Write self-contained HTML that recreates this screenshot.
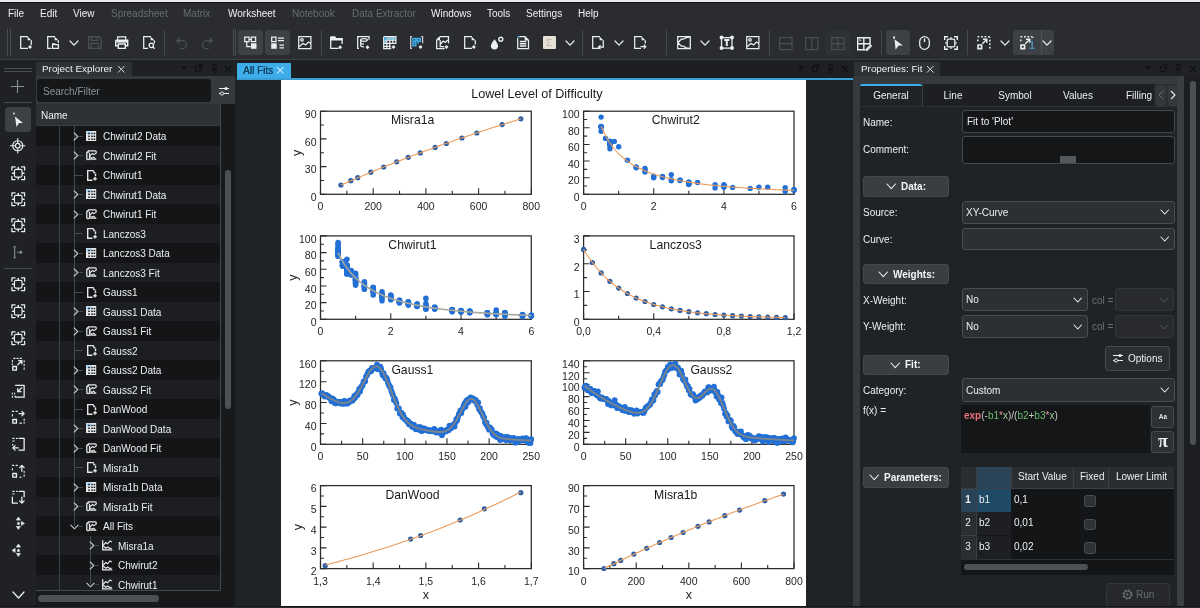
<!DOCTYPE html><html><head><meta charset="utf-8"><style>
html,body{margin:0;padding:0;}
body{width:1200px;height:608px;overflow:hidden;position:relative;background:#2a2c30;font-family:"Liberation Sans",sans-serif;}
.a{position:absolute;}
.t{position:absolute;white-space:nowrap;line-height:1;will-change:transform;}
</style></head><body>
<div class="a" style="left:0px;top:0px;width:1200px;height:2px;background:#e9eaec;"></div>
<div class="a" style="left:0px;top:2px;width:1200px;height:1px;background:#141517;"></div>
<div class="a" style="left:0px;top:3px;width:1200px;height:57px;background:#2a2c30;"></div>
<div class="t" style="left:8.3px;top:9.34px;font-size:10px;line-height:1;color:#f0f0f0;">File</div>
<div class="t" style="left:39.5px;top:9.34px;font-size:10px;line-height:1;color:#f0f0f0;">Edit</div>
<div class="t" style="left:73px;top:9.34px;font-size:10px;line-height:1;color:#f0f0f0;">View</div>
<div class="t" style="left:110.8px;top:9.34px;font-size:10px;line-height:1;color:#686c70;">Spreadsheet</div>
<div class="t" style="left:182.8px;top:9.34px;font-size:10px;line-height:1;color:#686c70;">Matrix</div>
<div class="t" style="left:227.5px;top:9.34px;font-size:10px;line-height:1;color:#f0f0f0;">Worksheet</div>
<div class="t" style="left:292px;top:9.34px;font-size:10px;line-height:1;color:#686c70;">Notebook</div>
<div class="t" style="left:351.5px;top:9.34px;font-size:10px;line-height:1;color:#686c70;">Data Extractor</div>
<div class="t" style="left:430.7px;top:9.34px;font-size:10px;line-height:1;color:#f0f0f0;">Windows</div>
<div class="t" style="left:487px;top:9.34px;font-size:10px;line-height:1;color:#f0f0f0;">Tools</div>
<div class="t" style="left:526px;top:9.34px;font-size:10px;line-height:1;color:#f0f0f0;">Settings</div>
<div class="t" style="left:577.7px;top:9.34px;font-size:10px;line-height:1;color:#f0f0f0;">Help</div>
<div class="a" style="left:0px;top:59px;width:1200px;height:1px;background:#3b3f43;"></div>
<div class="a" style="left:7px;top:29px;width:1px;height:27px;background:#4a4e52;"></div><div class="a" style="left:10px;top:29px;width:1px;height:27px;background:#4a4e52;"></div><svg class="a" style="left:20.2px;top:36px;overflow:visible;" width="14" height="14" viewBox="0 0 14 14"><g fill="none" stroke="#eceff1" stroke-width="1.25" stroke-linejoin="miter" stroke-linecap="butt"><path d="M8 0.6H0.7V12.4H8 M11.3 4.3V9"/><path d="M7.6 0.6L11.3 4.3H7.6z" fill="#eceff1" stroke="none"/><path d="M8 11l2 -2l2 2l-2 2z" fill="#eceff1" stroke="none"/></g></svg><svg class="a" style="left:46.8px;top:36px;overflow:visible;" width="14" height="14" viewBox="0 0 14 14"><g fill="none" stroke="#eceff1" stroke-width="1.25" stroke-linejoin="miter" stroke-linecap="butt"><path d="M8 0.6H0.7V12.4H4.5 M11.3 4.3V7"/><path d="M7.6 0.6L11.3 4.3H7.6z" fill="#eceff1" stroke="none"/><path d="M5.6 7.8h2.2l0.8 0.8h2.8v3.8h-5.8z" /><path d="M5.6 8.6h6" stroke-width="1"/></g></svg><svg class="a" style="left:69.5px;top:40.9px;overflow:visible;" width="8" height="4.2" viewBox="0 0 8 4.2"><path d="M0 0L4.0 4.2L8 0" stroke="#eceff1" stroke-width="1.2" fill="none" stroke-linejoin="round" stroke-linecap="round"/></svg><svg class="a" style="left:88.2px;top:36px;overflow:visible;" width="14" height="14" viewBox="0 0 14 14"><g fill="none" stroke="#4c5054" stroke-width="1.25" stroke-linejoin="miter" stroke-linecap="butt"><path d="M0.7 0.7h10.5l2 2v9.7h-12.5z M3.5 0.7v3.6h6v-3.6 M3 12.4v-5h7.5v5"/></g></svg><svg class="a" style="left:115px;top:36px;overflow:visible;" width="14" height="14" viewBox="0 0 14 14"><g fill="none" stroke="#eceff1" stroke-width="1.25" stroke-linejoin="miter" stroke-linecap="butt"><path d="M2.7 3.8v-3h8v3"/><path d="M0.7 4.3h12v5.5h-2 M2.7 9.8h-2v-5.5" stroke-width="1.4"/><path d="M3.3 8h7v4.4h-7z" stroke-width="1.4"/><path d="M1.5 4.8h10.5v1.8h-10.5z" fill="#eceff1" stroke="none"/></g></svg><svg class="a" style="left:142.5px;top:36px;overflow:visible;" width="14" height="14" viewBox="0 0 14 14"><g fill="none" stroke="#eceff1" stroke-width="1.25" stroke-linejoin="miter" stroke-linecap="butt"><path d="M8 0.6H0.7V12.4H5 M11.3 4.3V7.5"/><path d="M7.6 0.6L11.3 4.3H7.6z" fill="#eceff1" stroke="none"/><circle cx="8.3" cy="9.3" r="2.2"/><path d="M9.9 10.9l1.8 1.8" stroke-width="1.4"/></g></svg><div class="a" style="left:164px;top:30px;width:1px;height:25px;background:#45494d;"></div><svg class="a" style="left:175.5px;top:37px;overflow:visible;" width="12" height="13" viewBox="0 0 12 13"><g fill="none" stroke="#4c5054" stroke-width="1.25" stroke-linejoin="miter" stroke-linecap="butt"><path d="M3.5 1L0.8 3.7L3.5 6.4 M0.8 3.7h5.5a4 4 0 0 1 0 8h-2"/></g></svg><svg class="a" style="left:200.5px;top:37px;overflow:visible;" width="12" height="13" viewBox="0 0 12 13"><g fill="none" stroke="#4c5054" stroke-width="1.25" stroke-linejoin="miter" stroke-linecap="butt"><path d="M8.5 1L11.2 3.7L8.5 6.4 M11.2 3.7h-5.5a4 4 0 0 0 0 8h2"/></g></svg><div class="a" style="left:232.5px;top:29px;width:1px;height:27px;background:#4a4e52;"></div><div class="a" style="left:235px;top:29px;width:1px;height:27px;background:#4a4e52;"></div><div class="a" style="left:238px;top:30px;width:25px;height:25px;background:#3d4044;border-radius:3.5px;"></div><div class="a" style="left:265px;top:30px;width:25px;height:25px;background:#3d4044;border-radius:3.5px;"></div><svg class="a" style="left:244px;top:36px;overflow:visible;" width="14" height="14" viewBox="0 0 14 14"><g fill="none" stroke="#eceff1" stroke-width="1.25" stroke-linejoin="miter" stroke-linecap="butt"><path d="M0.7 1.2h4.3v4.3h-4.3z M7.3 1.2h4.3v4.3h-4.3z M5 3.3h2.3 M2.8 5.5v5.2h4"/><path d="M7 7.3h5.5v5.5h-5.5z" fill="#eceff1" stroke="none"/></g></svg><svg class="a" style="left:271px;top:36px;overflow:visible;" width="14" height="14" viewBox="0 0 14 14"><g fill="none" stroke="#eceff1" stroke-width="1.25" stroke-linejoin="miter" stroke-linecap="butt"><path d="M0.7 1.2h4.3v4.3h-4.3z M7 2h6 M7 4.7h6 M8.5 9.2h4.5 M8.5 11.8h4.5"/><path d="M0.2 7.3h5.5v5.5h-5.5z" fill="#eceff1" stroke="none"/></g></svg><svg class="a" style="left:297.7px;top:36px;overflow:visible;" width="14" height="14" viewBox="0 0 14 14"><g fill="none" stroke="#eceff1" stroke-width="1.25" stroke-linejoin="miter" stroke-linecap="butt"><path d="M0.7 0.7h12.2v11.8h-12.2z M1.5 10.5l3.5-3.2l2.5 1.7l3-3l2.3 1.6"/><circle cx="4" cy="3.8" r="1.3"/></g></svg><div class="a" style="left:320.5px;top:30px;width:1px;height:25px;background:#45494d;"></div><svg class="a" style="left:330.3px;top:36px;overflow:visible;" width="14" height="14" viewBox="0 0 14 14"><g fill="none" stroke="#eceff1" stroke-width="1.25" stroke-linejoin="miter" stroke-linecap="butt"><path d="M0.7 1.2h4l1.2 1.4h6.2v5.5 M0.7 1.2v11.2h8"/><path d="M0.2 0.6h4.8l1.2 1.4h6.4v2.4h-12.4z" fill="#eceff1" stroke="none"/><path d="M8.2 11.2l2 -2l2 2l-2 2z" fill="#eceff1" stroke="none"/></g></svg><svg class="a" style="left:357.3px;top:36px;overflow:visible;" width="14" height="14" viewBox="0 0 14 14"><g fill="none" stroke="#eceff1" stroke-width="1.25" stroke-linejoin="miter" stroke-linecap="butt"><path d="M2 0.7h-1.3v11.7h1.3 M2 0.7h10v3"/><ellipse cx="7" cy="4" rx="3.3" ry="1.3"/><path d="M3.7 4v5.5c0 0.8 1.5 1.3 3.3 1.3 M3.7 6.8c0 0.8 1.5 1.3 3.3 1.3"/><path d="M8.5 11.2l2 -2l2 2l-2 2z" fill="#eceff1" stroke="none"/></g></svg><svg class="a" style="left:383px;top:36px;overflow:visible;" width="14" height="14" viewBox="0 0 14 14"><g fill="none" stroke="#eceff1" stroke-width="1.25" stroke-linejoin="miter" stroke-linecap="butt"><path d="M0.7 0.7h12.2v7.3 M0.7 0.7v11.8h7.5 M0.7 4h12.2 M0.7 7.3h12.2 M0.7 10.4h7 M3.8 0.7v11.8 M6.8 0.7v11.5 M9.8 0.7v7.3"/><path d="M1.2 1.2h2.3v2.5h-2.3z" fill="#3daee9" stroke="none"/><path d="M4.3 1.2h8v2.5h-8z" fill="#8ccbea" stroke="none"/><path d="M1.2 4.5h2.3v2.5h-2.3z" fill="#8ccbea" stroke="none"/><path d="M8.5 11l2 -2l2 2l-2 2z" fill="#eceff1" stroke="none"/></g></svg><svg class="a" style="left:410px;top:36px;overflow:visible;" width="14" height="14" viewBox="0 0 14 14"><g fill="none" stroke="#eceff1" stroke-width="1.25" stroke-linejoin="miter" stroke-linecap="butt"><path d="M2 0.7h-1.3v11.7h1.3 M11.3 0.7h1.3v6.5" stroke="#c9ccd0"/><path d="M3 2.5h2.8v2.8h-2.8z M7.5 2.5h2.8v2.8h-2.8z M3 7h2.8v2.8h-2.8z M7.5 7h1.5" stroke="#3daee9" stroke-width="1.6"/><path d="M8.5 11l2 -2l2 2l-2 2z" fill="#eceff1" stroke="none"/></g></svg><svg class="a" style="left:436.2px;top:36px;overflow:visible;" width="14" height="14" viewBox="0 0 14 14"><g fill="none" stroke="#eceff1" stroke-width="1.25" stroke-linejoin="miter" stroke-linecap="butt"><path d="M4 0.7h8.5v6.5 M0.7 4v8.5h8 M0.7 4l3.3-3.3 M4.2 4v6.5h4 M4.2 8.5l3-3.5l2 1.5l2.5-2.5"/><path d="M1 4.3l3-3v3z" fill="#eceff1" stroke="none"/><path d="M8.5 11l2 -2l2 2l-2 2z" fill="#eceff1" stroke="none"/></g></svg><svg class="a" style="left:464.3px;top:36px;overflow:visible;" width="14" height="14" viewBox="0 0 14 14"><g fill="none" stroke="#eceff1" stroke-width="1.25" stroke-linejoin="miter" stroke-linecap="butt"><path d="M8 0.6H0.7V12.4H8 M11.3 4.3V8.5"/><path d="M7.6 0.6L11.3 4.3H7.6z" fill="#eceff1" stroke="none"/><path d="M7.800000000000001 11l2 -2l2 2l-2 2z" fill="#eceff1" stroke="none"/></g></svg><svg class="a" style="left:489.7px;top:36px;overflow:visible;" width="14" height="14" viewBox="0 0 14 14"><g fill="none" stroke="#eceff1" stroke-width="1.25" stroke-linejoin="miter" stroke-linecap="butt"><path d="M4.5 3.2c-1.8 2.6-3.6 4.7-3.6 6.6a3.6 3.6 0 0 0 7.2 0c0-1.9-1.8-4-3.6-6.6z" fill="#eceff1" stroke="none"/><circle cx="10.8" cy="3.2" r="2" stroke-width="1.4"/></g></svg><svg class="a" style="left:516.7px;top:36px;overflow:visible;" width="14" height="14" viewBox="0 0 14 14"><g fill="none" stroke="#eceff1" stroke-width="1.25" stroke-linejoin="miter" stroke-linecap="butt"><path d="M2 0.6H8l3.5 3.6V12.5H0.7V2"/><path d="M7.6 0.6L11.5 4.5H7.6z" fill="#eceff1" stroke="none"/><path d="M2.8 5.5h6.5 M2.8 7.8h6.5 M2.8 10h6.5" stroke-width="1.4"/><path d="M0 0h3l-1.5 2z" fill="#3daee9" stroke="none"/></g></svg><div class="a" style="left:543px;top:35.8px;width:12.5px;height:13px;background:#e6e1d6;border-radius:1px;"></div><svg class="a" style="left:543px;top:35.8px;overflow:visible;" width="12.5" height="13" viewBox="0 0 12.5 13"><path d="M8.8 3.5h-5l2.5 3l-2.5 3h5" fill="none" stroke="#bdb5a3" stroke-width="0.9"/></svg><svg class="a" style="left:566.3px;top:40.9px;overflow:visible;" width="8" height="4.2" viewBox="0 0 8 4.2"><path d="M0 0L4.0 4.2L8 0" stroke="#eceff1" stroke-width="1.2" fill="none" stroke-linejoin="round" stroke-linecap="round"/></svg><div class="a" style="left:581.5px;top:30px;width:1px;height:25px;background:#45494d;"></div><svg class="a" style="left:592px;top:36px;overflow:visible;" width="14" height="14" viewBox="0 0 14 14"><g fill="none" stroke="#eceff1" stroke-width="1.25" stroke-linejoin="miter" stroke-linecap="butt"><path d="M8 0.6H0.7V12.4H5 M11.3 4.3V9"/><path d="M7.6 0.6L11.3 4.3H7.6z" fill="#eceff1" stroke="none"/><path d="M11.3 9v2.2h-4.5 M8.5 9.3l-2 1.9l2 1.9" stroke-width="1.3"/><path d="M5 12.4H7" /></g></svg><svg class="a" style="left:614.8px;top:40.9px;overflow:visible;" width="8" height="4.2" viewBox="0 0 8 4.2"><path d="M0 0L4.0 4.2L8 0" stroke="#eceff1" stroke-width="1.2" fill="none" stroke-linejoin="round" stroke-linecap="round"/></svg><svg class="a" style="left:634px;top:36px;overflow:visible;" width="14" height="14" viewBox="0 0 14 14"><g fill="none" stroke="#eceff1" stroke-width="1.25" stroke-linejoin="miter" stroke-linecap="butt"><path d="M8 0.6H0.7V12.4H7 M11.3 4.3V7.5"/><path d="M7.6 0.6L11.3 4.3H7.6z" fill="#eceff1" stroke="none"/><path d="M6.5 10.7h5 M9.8 8.8l2 1.9l-2 1.9" stroke-width="1.3"/></g></svg><div class="a" style="left:666px;top:30px;width:1px;height:25px;background:#45494d;"></div><svg class="a" style="left:677px;top:36px;overflow:visible;" width="15" height="14" viewBox="0 0 15 14"><g fill="none" stroke="#eceff1" stroke-width="1.25" stroke-linejoin="miter" stroke-linecap="butt"><path d="M0.7 0.7h12.6v12h-12.6z M1 6.7l3.3-3.5h2l3.5-1.8h2.5 M1 6.7l3.3 3.5h2l3.5 1.8h2.5"/></g></svg><svg class="a" style="left:700.8px;top:40.9px;overflow:visible;" width="8" height="4.2" viewBox="0 0 8 4.2"><path d="M0 0L4.0 4.2L8 0" stroke="#eceff1" stroke-width="1.2" fill="none" stroke-linejoin="round" stroke-linecap="round"/></svg><svg class="a" style="left:719.5px;top:35.8px;overflow:visible;" width="14" height="14" viewBox="0 0 14 14"><g fill="none" stroke="#eceff1" stroke-width="1.25" stroke-linejoin="miter" stroke-linecap="butt"><path d="M1.5 1.5h10.5v10.5h-10.5z"/><path d="M4.2 4h5.2 M6.8 4v6" stroke-width="2"/><circle cx="1.5" cy="1.5" r="1.3" fill="#eceff1"/><circle cx="12" cy="1.5" r="1.3" fill="#eceff1"/><circle cx="1.5" cy="12" r="1.3" fill="#eceff1"/><circle cx="12" cy="12" r="1.3" fill="#eceff1"/></g></svg><svg class="a" style="left:745.7px;top:36px;overflow:visible;" width="14" height="14" viewBox="0 0 14 14"><g fill="none" stroke="#eceff1" stroke-width="1.25" stroke-linejoin="miter" stroke-linecap="butt"><path d="M0.7 0.7h12.2v11.8h-12.2z M1.5 10.5l3.5-3.2l2.5 1.7l3-3l2.3 1.6"/><circle cx="4" cy="3.8" r="1.3"/></g></svg><div class="a" style="left:769px;top:30px;width:1px;height:25px;background:#45494d;"></div><svg class="a" style="left:778.5px;top:36.5px;overflow:visible;" width="14" height="14" viewBox="0 0 14 14"><g fill="none" stroke="#4a4e52" stroke-width="1.25" stroke-linejoin="miter" stroke-linecap="butt"><path d="M0.7 0.7h12.3v12h-12.3z M0.7 6.7h12.3"/></g></svg><svg class="a" style="left:805px;top:36.5px;overflow:visible;" width="14" height="14" viewBox="0 0 14 14"><g fill="none" stroke="#4a4e52" stroke-width="1.25" stroke-linejoin="miter" stroke-linecap="butt"><path d="M0.7 0.7h12.3v12h-12.3z M6.8 0.7v12"/></g></svg><div class="a" style="left:826px;top:30px;width:24.5px;height:24.5px;background:#2d3034;border-radius:3.5px;"></div><svg class="a" style="left:831.3px;top:36.5px;overflow:visible;" width="14" height="14" viewBox="0 0 14 14"><g fill="none" stroke="#4a4e52" stroke-width="1.25" stroke-linejoin="miter" stroke-linecap="butt"><path d="M0.7 0.7h12.3v12h-12.3z M6.8 0.7v12 M0.7 6.7h12.3"/></g></svg><svg class="a" style="left:857.3px;top:36.5px;overflow:visible;" width="15" height="14" viewBox="0 0 15 14"><g fill="none" stroke="#eceff1" stroke-width="1.25" stroke-linejoin="miter" stroke-linecap="butt"><path d="M8 12.7h-7.3v-12h12.3v7 M6.8 0.7v12 M0.7 6.7h12.3" stroke-width="1.4"/><path d="M2.3 2l2.5 1.2l-1.5 0.5l-0.3 1.5z" fill="#eceff1" stroke="none"/><path d="M9 12.5l4.5-4.5l1 1l-4.5 4.5h-1z" stroke-width="1.1"/></g></svg><div class="a" style="left:881px;top:30px;width:1px;height:25px;background:#45494d;"></div><div class="a" style="left:885.5px;top:30px;width:24.5px;height:24.5px;background:#3d4044;border-radius:3.5px;"></div><svg class="a" style="left:892px;top:35.5px;overflow:visible;" width="12" height="14" viewBox="0 0 12 14"><path d="M2.5 3.2l8.3 6.3h-4.2l-3 4.3z" fill="#eceff1"/><rect x="1" y="0.5" width="2" height="2" fill="#eceff1"/></svg><svg class="a" style="left:919px;top:36px;overflow:visible;" width="11" height="14" viewBox="0 0 11 14"><g fill="none" stroke="#eceff1" stroke-width="1.25" stroke-linejoin="miter" stroke-linecap="butt"><rect x="0.7" y="0.7" width="9.6" height="12.6" rx="4.8"/><path d="M5.5 2.5v3.5" stroke-width="1.4"/></g></svg><svg class="a" style="left:944.3px;top:35.5px;overflow:visible;" width="14" height="14" viewBox="0 0 14 14"><g fill="none" stroke="#eceff1" stroke-width="1.25" stroke-linejoin="miter" stroke-linecap="butt"><path d="M0.7 4v-3.3h3.3 M10 0.7h3.3v3.3 M13.3 10v3.3h-3.3 M4 13.3h-3.3v-3.3" stroke-width="1.4"/><rect x="3.2" y="3.2" width="7.6" height="7.6" rx="1.4" stroke-width="1.3"/><path d="M7 1.3v1.4 M7 11.3v1.4 M1.3 7h1.4 M11.3 7h1.4" stroke-width="1.6"/></g></svg><div class="a" style="left:967px;top:30px;width:1px;height:25px;background:#45494d;"></div><svg class="a" style="left:976.9px;top:35.5px;overflow:visible;" width="14" height="14" viewBox="0 0 14 14"><g fill="none" stroke="#eceff1" stroke-width="1.25" stroke-linejoin="miter" stroke-linecap="butt"><path d="M0.5 0.8h1.8 M4 0.8h1.8 M7.5 0.8h1.8 M11 0.8h1.5 M12.8 1.2v0.8 M12.8 3.8v1.8 M12.8 7.3v1.8 M12.8 10.8v1.8 M0.8 3.5v1.8" stroke-width="1.5"/><path d="M1 9h3.6v3.6h-3.6z" stroke-width="1.6"/><path d="M5.3 7.8l4-4 M6 3.3h3.8v3.8" stroke-width="1.4"/></g></svg><svg class="a" style="left:1000.8px;top:40.9px;overflow:visible;" width="8" height="4.2" viewBox="0 0 8 4.2"><path d="M0 0L4.0 4.2L8 0" stroke="#eceff1" stroke-width="1.2" fill="none" stroke-linejoin="round" stroke-linecap="round"/></svg><div class="a" style="left:1013.3px;top:30px;width:40.5px;height:24.5px;background:#3d4044;border-radius:3.5px;"></div><div class="a" style="left:1040.5px;top:30px;width:1px;height:24.5px;background:#4d5155;"></div><svg class="a" style="left:1019.5px;top:35.5px;overflow:visible;" width="14" height="14" viewBox="0 0 14 14"><g fill="none" stroke="#eceff1" stroke-width="1.25" stroke-linejoin="miter" stroke-linecap="butt"><path d="M0.5 0.8h1.8 M4 0.8h1.8 M7.5 0.8h1.8 M11 0.8h1.5 M12.8 1.2v0.8 M0.8 3.5v1.8" stroke-width="1.5"/><path d="M1 9h3.6v3.6h-3.6z" stroke-width="1.6"/><path d="M5.3 7.8l4-4 M6 3.3h3.8v3.8" stroke-width="1.4"/></g></svg><div class="t" style="left:1028.5px;top:39.5px;font-size:10.5px;line-height:1;color:#4f8fb3;font-weight:bold">1</div><svg class="a" style="left:1043.0px;top:40.9px;overflow:visible;" width="8" height="4.2" viewBox="0 0 8 4.2"><path d="M0 0L4.0 4.2L8 0" stroke="#eceff1" stroke-width="1.2" fill="none" stroke-linejoin="round" stroke-linecap="round"/></svg>
<div class="a" style="left:0px;top:60px;width:36px;height:546px;background:#1f2124;"></div>
<div class="a" style="left:4px;top:67.5px;width:28px;height:1px;background:#4a4e52;"></div><div class="a" style="left:4px;top:70.5px;width:28px;height:1px;background:#4a4e52;"></div><svg class="a" style="left:11px;top:80px;overflow:visible;" width="13" height="13" viewBox="0 0 13 13"><path d="M6.5 0v13M0 6.5h13" stroke="#8a8e92" stroke-width="1.1"/></svg><div class="a" style="left:4px;top:102px;width:28px;height:1px;background:#45494d;"></div><div class="a" style="left:5px;top:106.5px;width:25.5px;height:25px;background:#3d4044;border-radius:3.5px;"></div><svg class="a" style="left:11px;top:112px;overflow:visible;" width="14" height="16" viewBox="0 0 14 16"><path d="M4 4.5l8 6.5h-4l-2.5 4z" fill="#eceff1"/><circle cx="3" cy="1.5" r="0.9" fill="#eceff1"/></svg><svg class="a" style="left:10.3px;top:137.5px;overflow:visible;" width="15.5" height="15.5" viewBox="0 0 16 16"><g fill="none" stroke="#eceff1" stroke-width="1.2" stroke-linejoin="round" stroke-linecap="round"><circle cx="8" cy="8" r="5.2"/><circle cx="8" cy="8" r="2.4"/><path d="M8 0.5v4.2M8 11.3v4.2M0.5 8h4.2M11.3 8h4.2" stroke-width="1.1"/></g></svg><svg class="a" style="left:10.5px;top:165.5px;overflow:visible;" width="14.5" height="14.5" viewBox="0 0 16 16"><g fill="none" stroke="#eceff1" stroke-width="1.3" stroke-linejoin="round" stroke-linecap="round"><path d="M1 4.5V1h3.5 M11.5 1H15v3.5 M15 11.5V15h-3.5 M4.5 15H1v-3.5" stroke-width="1.4"/><rect x="3.8" y="3.8" width="8.4" height="8.4" rx="1.6" stroke-width="1.3"/><path d="M8 1.6v1.4 M8 13v1.4 M1.6 8h1.4 M13 8h1.4" stroke-width="1.6"/></g></svg><svg class="a" style="left:10.5px;top:191.5px;overflow:visible;" width="14.5" height="14.5" viewBox="0 0 16 16"><g fill="none" stroke="#eceff1" stroke-width="1.3" stroke-linejoin="round" stroke-linecap="round"><path d="M1 4.5V1h3.5 M11.5 1H15v3.5 M15 11.5V15h-3.5 M4.5 15H1v-3.5" stroke-width="1.4"/><rect x="3.8" y="3.8" width="8.4" height="8.4" rx="1.6" stroke-width="1.3"/><path d="M8 1.6v1.4 M8 13v1.4 M1.6 8h1.4 M13 8h1.4" stroke-width="1.6"/></g></svg><svg class="a" style="left:10.5px;top:218px;overflow:visible;" width="14.5" height="14.5" viewBox="0 0 16 16"><g fill="none" stroke="#eceff1" stroke-width="1.3" stroke-linejoin="round" stroke-linecap="round"><path d="M1 4.5V1h3.5 M11.5 1H15v3.5 M15 11.5V15h-3.5 M4.5 15H1v-3.5" stroke-width="1.4"/><rect x="3.8" y="3.8" width="8.4" height="8.4" rx="1.6" stroke-width="1.3"/><path d="M8 1.6v1.4 M8 13v1.4 M1.6 8h1.4 M13 8h1.4" stroke-width="1.6"/></g></svg><svg class="a" style="left:10.5px;top:244.5px;overflow:visible;" width="14.5" height="14.5" viewBox="0 0 16 16"><g fill="none" stroke="#8a8e92" stroke-width="1.2" stroke-linejoin="round" stroke-linecap="round"><path d="M3 2h2M4 2v12M3 14h2 M7 8h3.5" /><path d="M10 5.5l3 2.5l-3 2.5z" fill="#8a8e92" stroke="none"/></g></svg><div class="a" style="left:4px;top:267.5px;width:28px;height:1px;background:#45494d;"></div><svg class="a" style="left:10.5px;top:277px;overflow:visible;" width="14.5" height="14.5" viewBox="0 0 16 16"><g fill="none" stroke="#eceff1" stroke-width="1.3" stroke-linejoin="round" stroke-linecap="round"><path d="M1 4.5V1h3.5 M11.5 1H15v3.5 M15 11.5V15h-3.5 M4.5 15H1v-3.5" stroke-width="1.4"/><rect x="3.8" y="3.8" width="8.4" height="8.4" rx="1.6" stroke-width="1.3"/><path d="M8 1.6v1.4 M8 13v1.4 M1.6 8h1.4 M13 8h1.4" stroke-width="1.6"/></g></svg><svg class="a" style="left:10.5px;top:304px;overflow:visible;" width="14.5" height="14.5" viewBox="0 0 16 16"><g fill="none" stroke="#eceff1" stroke-width="1.3" stroke-linejoin="round" stroke-linecap="round"><path d="M1 4.5V1h3.5 M11.5 1H15v3.5 M15 11.5V15h-3.5 M4.5 15H1v-3.5" stroke-width="1.4"/><rect x="3.8" y="3.8" width="8.4" height="8.4" rx="1.6" stroke-width="1.3"/><path d="M8 1.6v1.4 M8 13v1.4 M1.6 8h1.4 M13 8h1.4" stroke-width="1.6"/></g></svg><svg class="a" style="left:10.5px;top:330.5px;overflow:visible;" width="14.5" height="14.5" viewBox="0 0 16 16"><g fill="none" stroke="#eceff1" stroke-width="1.3" stroke-linejoin="round" stroke-linecap="round"><path d="M1 4.5V1h3.5 M11.5 1H15v3.5 M15 11.5V15h-3.5 M4.5 15H1v-3.5" stroke-width="1.4"/><rect x="3.8" y="3.8" width="8.4" height="8.4" rx="1.6" stroke-width="1.3"/><path d="M8 1.6v1.4 M8 13v1.4 M1.6 8h1.4 M13 8h1.4" stroke-width="1.6"/></g></svg><svg class="a" style="left:10.5px;top:356.75px;overflow:visible;" width="14.5" height="14.5" viewBox="0 0 16 16"><g fill="none" stroke="#eceff1" stroke-width="1.2" stroke-linejoin="round" stroke-linecap="round"><path d="M3 1.5h1.5 M6.5 1.5h1.5 M10 1.5h1.5 M14.5 4v1.5 M14.5 8v1.5 M14.5 12v1.5 M1.5 4v1.5 M1.5 7.5v1"/><path d="M2 10.5h4v4h-4z" stroke-width="1.5"/><path d="M7.5 8.5l4.5-4.5 M8.5 4h3.5v3.5" stroke-width="1.4"/></g></svg><svg class="a" style="left:10.5px;top:383.75px;overflow:visible;" width="14.5" height="14.5" viewBox="0 0 16 16"><g fill="none" stroke="#eceff1" stroke-width="1.2" stroke-linejoin="round" stroke-linecap="round"><path d="M5 1.5h9.5v13h-9.5" stroke-width="1.4"/><path d="M1.5 10v1 M1.5 13.5v1 M4 10v1 M4 13.5h1"/><path d="M12 4l-4.5 4.5 M7.5 5v3.5h3.5" stroke-width="1.4"/></g></svg><svg class="a" style="left:10.5px;top:410.25px;overflow:visible;" width="14.5" height="14.5" viewBox="0 0 16 16"><g fill="none" stroke="#eceff1" stroke-width="1.2" stroke-linejoin="round" stroke-linecap="round"><path d="M1.5 1.5h1.5 M5.5 1.5h1.5 M14.5 10v1.5 M14.5 13.5v1 M10 14.5h1.5 M1.5 5v1.5"/><path d="M2 10.5h4v4h-4z" stroke-width="1.5"/><path d="M9 4h5.5 M12 1.5l2.5 2.5l-2.5 2.5" stroke-width="1.4"/></g></svg><svg class="a" style="left:10.5px;top:436.75px;overflow:visible;" width="14.5" height="14.5" viewBox="0 0 16 16"><g fill="none" stroke="#eceff1" stroke-width="1.2" stroke-linejoin="round" stroke-linecap="round"><path d="M2 1.5h1.5 M2 4.5h1.5 M6 1.5h1 M2 8v1"/><path d="M9 1.5h5.5v13h-5.5" stroke-width="1.4"/><path d="M2 12h6 M4.5 9.5l-2.5 2.5l2.5 2.5" stroke-width="1.4"/></g></svg><svg class="a" style="left:10.5px;top:463.75px;overflow:visible;" width="14.5" height="14.5" viewBox="0 0 16 16"><g fill="none" stroke="#eceff1" stroke-width="1.2" stroke-linejoin="round" stroke-linecap="round"><path d="M1.5 1.5h1.5 M5.5 1.5h1.5 M14.5 8v1.5 M14.5 12v1.5 M10 14.5h1 M1.5 5v1.5"/><path d="M2 10.5h4v4h-4z" stroke-width="1.5"/><path d="M12 8v-6.5 M9.5 4l2.5-2.5l2.5 2.5" stroke-width="1.4"/></g></svg><svg class="a" style="left:10.5px;top:490.25px;overflow:visible;" width="14.5" height="14.5" viewBox="0 0 16 16"><g fill="none" stroke="#eceff1" stroke-width="1.2" stroke-linejoin="round" stroke-linecap="round"><path d="M2 1.5h1.5 M2 4.5h1.5 M6 1.5h1"/><path d="M9 1.5h5.5v6 M1.5 8v6.5h5.5" stroke-width="1.4"/><path d="M12 8v6.5 M9.5 12l2.5 2.5l2.5-2.5" stroke-width="1.4"/></g></svg><svg class="a" style="left:10.5px;top:516.25px;overflow:visible;" width="14.5" height="14.5" viewBox="0 0 16 16"><g fill="none" stroke="#eceff1" stroke-width="1.2" stroke-linejoin="round" stroke-linecap="round"><path d="M8 1.5l-2 3h4z M8 14.5l-2-3h4z M14.5 8l-3-2v4z" fill="#eceff1" stroke-width="0.8"/><path d="M7.5 7.5h1.5v1.5h-1.5z" fill="#eceff1"/></g></svg><svg class="a" style="left:10.5px;top:542.75px;overflow:visible;" width="14.5" height="14.5" viewBox="0 0 16 16"><g fill="none" stroke="#eceff1" stroke-width="1.2" stroke-linejoin="round" stroke-linecap="round"><path d="M8 1.5l-2 3h4z M8 14.5l-2-3h4z M1.5 8l3-2v4z" fill="#eceff1" stroke-width="0.8"/><path d="M7.5 7.5h1.5v1.5h-1.5z" fill="#eceff1"/></g></svg><svg class="a" style="left:12.5px;top:591.5px;overflow:visible;" width="11" height="6" viewBox="0 0 11 6"><path d="M0 0L5.5 6L11 0" stroke="#eceff1" stroke-width="1.3" fill="none" stroke-linejoin="round" stroke-linecap="round"/></svg>
<div class="a" style="left:36px;top:60px;width:199px;height:16px;background:#1f2124;"></div>
<div class="a" style="left:36px;top:62px;width:96px;height:14px;background:#2e3135;"></div>
<div class="t" style="left:42.3px;top:63.62px;font-size:9.9px;line-height:1;color:#f0f0f0;">Project Explorer</div>
<div class="a" style="left:36px;top:76px;width:199px;height:530px;background:#36393d;"></div>
<div class="a" style="left:37px;top:79px;width:174px;height:22.5px;background:#161719;border-radius:3px;"></div>
<div class="t" style="left:43px;top:87.23px;font-size:10px;line-height:1;color:#8d9296;">Search/Filter</div>
<div class="a" style="left:36px;top:104px;width:184px;height:21.5px;background:#2e3135;"></div>
<div class="a" style="left:36px;top:125px;width:184px;height:1px;background:#3a3d41;"></div>
<div class="t" style="left:40.5px;top:110.94px;font-size:10px;line-height:1;color:#f0f0f0;">Name</div>
<div class="a" style="left:36px;top:126px;width:184px;height:464px;overflow:hidden">
<div class="a" style="left:0;top:0.0px;width:184px;height:20.0px;background:#141517"></div>
<div class="a" style="left:0;top:19.5px;width:184px;height:20.0px;background:#1c1e21"></div>
<div class="a" style="left:0;top:39.0px;width:184px;height:20.0px;background:#141517"></div>
<div class="a" style="left:0;top:58.5px;width:184px;height:20.0px;background:#1c1e21"></div>
<div class="a" style="left:0;top:78.0px;width:184px;height:20.0px;background:#141517"></div>
<div class="a" style="left:0;top:97.5px;width:184px;height:20.0px;background:#1c1e21"></div>
<div class="a" style="left:0;top:117.0px;width:184px;height:20.0px;background:#141517"></div>
<div class="a" style="left:0;top:136.5px;width:184px;height:20.0px;background:#1c1e21"></div>
<div class="a" style="left:0;top:156.0px;width:184px;height:20.0px;background:#141517"></div>
<div class="a" style="left:0;top:175.5px;width:184px;height:20.0px;background:#1c1e21"></div>
<div class="a" style="left:0;top:195.0px;width:184px;height:20.0px;background:#141517"></div>
<div class="a" style="left:0;top:214.5px;width:184px;height:20.0px;background:#1c1e21"></div>
<div class="a" style="left:0;top:234.0px;width:184px;height:20.0px;background:#141517"></div>
<div class="a" style="left:0;top:253.5px;width:184px;height:20.0px;background:#1c1e21"></div>
<div class="a" style="left:0;top:273.0px;width:184px;height:20.0px;background:#141517"></div>
<div class="a" style="left:0;top:292.5px;width:184px;height:20.0px;background:#1c1e21"></div>
<div class="a" style="left:0;top:312.0px;width:184px;height:20.0px;background:#141517"></div>
<div class="a" style="left:0;top:331.5px;width:184px;height:20.0px;background:#1c1e21"></div>
<div class="a" style="left:0;top:351.0px;width:184px;height:20.0px;background:#141517"></div>
<div class="a" style="left:0;top:370.5px;width:184px;height:20.0px;background:#1c1e21"></div>
<div class="a" style="left:0;top:390.0px;width:184px;height:20.0px;background:#141517"></div>
<div class="a" style="left:0;top:409.5px;width:184px;height:20.0px;background:#1c1e21"></div>
<div class="a" style="left:0;top:429.0px;width:184px;height:20.0px;background:#141517"></div>
<div class="a" style="left:0;top:448.5px;width:184px;height:20.0px;background:#1c1e21"></div>
<div class="a" style="left:22.5px;top:0px;width:1.2px;height:464px;background:#3d4044;"></div><div class="a" style="left:38px;top:0px;width:1px;height:399.75px;background:#45484c;"></div><div class="a" style="left:54px;top:409.5px;width:1px;height:48.75px;background:#45484c;"></div><svg class="a" style="left:36.5px;top:5.85px;overflow:visible;" width="6" height="9" viewBox="0 0 6 9"><path d="M0.8 0.6L4.8 4.5L0.8 8.4" fill="none" stroke="#c8cbce" stroke-width="1.15"/></svg><div class="a" style="left:43.2px;top:9.85px;width:3.5px;height:1px;background:#45484c;"></div><svg class="a" style="left:50.1px;top:4.75px;overflow:visible;" width="11" height="11" viewBox="0 0 11 11"><g fill="none" stroke="#e6e8ea" stroke-width="1.2"><rect x="0" y="0" width="10.2" height="10" fill="#e6e8ea" stroke="none"/><path d="M0.5 0.5h5v3h-5z" fill="#9fd0f0" stroke="none"/><g fill="#141517" stroke="none"><rect x="2.2" y="1.8" width="1.6" height="1.4"/><rect x="5.2" y="1.8" width="1.6" height="1.4" fill="#2a3a48"/><rect x="7.6" y="1.8" width="1.6" height="1.4"/><rect x="2.2" y="4.6" width="1.6" height="1.4"/><rect x="5.2" y="4.6" width="1.6" height="1.4"/><rect x="7.6" y="4.6" width="1.6" height="1.4"/><rect x="2.2" y="7.5" width="1.6" height="1.4"/><rect x="5.2" y="7.5" width="1.6" height="1.4"/><rect x="7.6" y="7.5" width="1.6" height="1.4"/></g></g></svg><div class="t" style="left:67px;top:6.05px;font-size:10px;color:#eceff1;line-height:1">Chwirut2 Data</div><svg class="a" style="left:36.5px;top:25.35px;overflow:visible;" width="6" height="9" viewBox="0 0 6 9"><path d="M0.8 0.6L4.8 4.5L0.8 8.4" fill="none" stroke="#c8cbce" stroke-width="1.15"/></svg><div class="a" style="left:43.2px;top:29.35px;width:3.5px;height:1px;background:#45484c;"></div><svg class="a" style="left:50.1px;top:24.25px;overflow:visible;" width="11" height="11" viewBox="0 0 11 11"><g fill="none" stroke="#e6e8ea" stroke-width="1.2"><path d="M0.8 9.5V2.6L2.6 0.8H9.2Q10.2 0.8 10.2 1.8V3.5" stroke-width="1.3"/><path d="M0.6 2.8L2.8 0.6V2.8z" fill="#e6e8ea" stroke="none"/><path d="M3.5 2.8V9.2H10.3" stroke-width="1.2"/><path d="M3.5 6.2L6.5 3.5L8 4.6L9.8 3.2 M3.5 6.2L5.8 8.4L7.6 7.2L9.5 8.8" stroke-width="1.1"/><path d="M0.8 9.5H3" stroke-width="1.3"/></g></svg><div class="t" style="left:67px;top:25.55px;font-size:10px;color:#eceff1;line-height:1">Chwirut2 Fit</div><div class="a" style="left:39px;top:48.85px;width:7.5px;height:1px;background:#45484c;"></div><svg class="a" style="left:51.0px;top:43.75px;overflow:visible;" width="11" height="11" viewBox="0 0 11 11"><g fill="none" stroke="#e6e8ea" stroke-width="1.2"><path d="M6.8 0.6H0.7V10.3H5.5 M8.5 3.5V6.3" stroke-width="1.4"/><path d="M6.2 0.3L9 3.2H6.2z" fill="#e6e8ea" stroke="none"/><path d="M8 7v3.5 M6.3 8.8h3.5" stroke-width="1.4"/></g></svg><div class="t" style="left:67px;top:45.05px;font-size:10px;color:#eceff1;line-height:1">Chwirut1</div><svg class="a" style="left:36.5px;top:64.35px;overflow:visible;" width="6" height="9" viewBox="0 0 6 9"><path d="M0.8 0.6L4.8 4.5L0.8 8.4" fill="none" stroke="#c8cbce" stroke-width="1.15"/></svg><div class="a" style="left:43.2px;top:68.35px;width:3.5px;height:1px;background:#45484c;"></div><svg class="a" style="left:50.1px;top:63.24999999999999px;overflow:visible;" width="11" height="11" viewBox="0 0 11 11"><g fill="none" stroke="#e6e8ea" stroke-width="1.2"><rect x="0" y="0" width="10.2" height="10" fill="#e6e8ea" stroke="none"/><path d="M0.5 0.5h5v3h-5z" fill="#9fd0f0" stroke="none"/><g fill="#141517" stroke="none"><rect x="2.2" y="1.8" width="1.6" height="1.4"/><rect x="5.2" y="1.8" width="1.6" height="1.4" fill="#2a3a48"/><rect x="7.6" y="1.8" width="1.6" height="1.4"/><rect x="2.2" y="4.6" width="1.6" height="1.4"/><rect x="5.2" y="4.6" width="1.6" height="1.4"/><rect x="7.6" y="4.6" width="1.6" height="1.4"/><rect x="2.2" y="7.5" width="1.6" height="1.4"/><rect x="5.2" y="7.5" width="1.6" height="1.4"/><rect x="7.6" y="7.5" width="1.6" height="1.4"/></g></g></svg><div class="t" style="left:67px;top:64.55px;font-size:10px;color:#eceff1;line-height:1">Chwirut1 Data</div><svg class="a" style="left:36.5px;top:83.85px;overflow:visible;" width="6" height="9" viewBox="0 0 6 9"><path d="M0.8 0.6L4.8 4.5L0.8 8.4" fill="none" stroke="#c8cbce" stroke-width="1.15"/></svg><div class="a" style="left:43.2px;top:87.85px;width:3.5px;height:1px;background:#45484c;"></div><svg class="a" style="left:50.1px;top:82.75px;overflow:visible;" width="11" height="11" viewBox="0 0 11 11"><g fill="none" stroke="#e6e8ea" stroke-width="1.2"><path d="M0.8 9.5V2.6L2.6 0.8H9.2Q10.2 0.8 10.2 1.8V3.5" stroke-width="1.3"/><path d="M0.6 2.8L2.8 0.6V2.8z" fill="#e6e8ea" stroke="none"/><path d="M3.5 2.8V9.2H10.3" stroke-width="1.2"/><path d="M3.5 6.2L6.5 3.5L8 4.6L9.8 3.2 M3.5 6.2L5.8 8.4L7.6 7.2L9.5 8.8" stroke-width="1.1"/><path d="M0.8 9.5H3" stroke-width="1.3"/></g></svg><div class="t" style="left:67px;top:84.05px;font-size:10px;color:#eceff1;line-height:1">Chwirut1 Fit</div><div class="a" style="left:39px;top:107.35px;width:7.5px;height:1px;background:#45484c;"></div><svg class="a" style="left:51.0px;top:102.25px;overflow:visible;" width="11" height="11" viewBox="0 0 11 11"><g fill="none" stroke="#e6e8ea" stroke-width="1.2"><path d="M6.8 0.6H0.7V10.3H5.5 M8.5 3.5V6.3" stroke-width="1.4"/><path d="M6.2 0.3L9 3.2H6.2z" fill="#e6e8ea" stroke="none"/><path d="M8 7v3.5 M6.3 8.8h3.5" stroke-width="1.4"/></g></svg><div class="t" style="left:67px;top:103.55px;font-size:10px;color:#eceff1;line-height:1">Lanczos3</div><svg class="a" style="left:36.5px;top:122.85px;overflow:visible;" width="6" height="9" viewBox="0 0 6 9"><path d="M0.8 0.6L4.8 4.5L0.8 8.4" fill="none" stroke="#c8cbce" stroke-width="1.15"/></svg><div class="a" style="left:43.2px;top:126.85px;width:3.5px;height:1px;background:#45484c;"></div><svg class="a" style="left:50.1px;top:121.75px;overflow:visible;" width="11" height="11" viewBox="0 0 11 11"><g fill="none" stroke="#e6e8ea" stroke-width="1.2"><rect x="0" y="0" width="10.2" height="10" fill="#e6e8ea" stroke="none"/><path d="M0.5 0.5h5v3h-5z" fill="#9fd0f0" stroke="none"/><g fill="#141517" stroke="none"><rect x="2.2" y="1.8" width="1.6" height="1.4"/><rect x="5.2" y="1.8" width="1.6" height="1.4" fill="#2a3a48"/><rect x="7.6" y="1.8" width="1.6" height="1.4"/><rect x="2.2" y="4.6" width="1.6" height="1.4"/><rect x="5.2" y="4.6" width="1.6" height="1.4"/><rect x="7.6" y="4.6" width="1.6" height="1.4"/><rect x="2.2" y="7.5" width="1.6" height="1.4"/><rect x="5.2" y="7.5" width="1.6" height="1.4"/><rect x="7.6" y="7.5" width="1.6" height="1.4"/></g></g></svg><div class="t" style="left:67px;top:123.05px;font-size:10px;color:#eceff1;line-height:1">Lanczos3 Data</div><svg class="a" style="left:36.5px;top:142.35px;overflow:visible;" width="6" height="9" viewBox="0 0 6 9"><path d="M0.8 0.6L4.8 4.5L0.8 8.4" fill="none" stroke="#c8cbce" stroke-width="1.15"/></svg><div class="a" style="left:43.2px;top:146.35px;width:3.5px;height:1px;background:#45484c;"></div><svg class="a" style="left:50.1px;top:141.25px;overflow:visible;" width="11" height="11" viewBox="0 0 11 11"><g fill="none" stroke="#e6e8ea" stroke-width="1.2"><path d="M0.8 9.5V2.6L2.6 0.8H9.2Q10.2 0.8 10.2 1.8V3.5" stroke-width="1.3"/><path d="M0.6 2.8L2.8 0.6V2.8z" fill="#e6e8ea" stroke="none"/><path d="M3.5 2.8V9.2H10.3" stroke-width="1.2"/><path d="M3.5 6.2L6.5 3.5L8 4.6L9.8 3.2 M3.5 6.2L5.8 8.4L7.6 7.2L9.5 8.8" stroke-width="1.1"/><path d="M0.8 9.5H3" stroke-width="1.3"/></g></svg><div class="t" style="left:67px;top:142.55px;font-size:10px;color:#eceff1;line-height:1">Lanczos3 Fit</div><div class="a" style="left:39px;top:165.85px;width:7.5px;height:1px;background:#45484c;"></div><svg class="a" style="left:51.0px;top:160.75px;overflow:visible;" width="11" height="11" viewBox="0 0 11 11"><g fill="none" stroke="#e6e8ea" stroke-width="1.2"><path d="M6.8 0.6H0.7V10.3H5.5 M8.5 3.5V6.3" stroke-width="1.4"/><path d="M6.2 0.3L9 3.2H6.2z" fill="#e6e8ea" stroke="none"/><path d="M8 7v3.5 M6.3 8.8h3.5" stroke-width="1.4"/></g></svg><div class="t" style="left:67px;top:162.05px;font-size:10px;color:#eceff1;line-height:1">Gauss1</div><svg class="a" style="left:36.5px;top:181.35px;overflow:visible;" width="6" height="9" viewBox="0 0 6 9"><path d="M0.8 0.6L4.8 4.5L0.8 8.4" fill="none" stroke="#c8cbce" stroke-width="1.15"/></svg><div class="a" style="left:43.2px;top:185.35px;width:3.5px;height:1px;background:#45484c;"></div><svg class="a" style="left:50.1px;top:180.25px;overflow:visible;" width="11" height="11" viewBox="0 0 11 11"><g fill="none" stroke="#e6e8ea" stroke-width="1.2"><rect x="0" y="0" width="10.2" height="10" fill="#e6e8ea" stroke="none"/><path d="M0.5 0.5h5v3h-5z" fill="#9fd0f0" stroke="none"/><g fill="#141517" stroke="none"><rect x="2.2" y="1.8" width="1.6" height="1.4"/><rect x="5.2" y="1.8" width="1.6" height="1.4" fill="#2a3a48"/><rect x="7.6" y="1.8" width="1.6" height="1.4"/><rect x="2.2" y="4.6" width="1.6" height="1.4"/><rect x="5.2" y="4.6" width="1.6" height="1.4"/><rect x="7.6" y="4.6" width="1.6" height="1.4"/><rect x="2.2" y="7.5" width="1.6" height="1.4"/><rect x="5.2" y="7.5" width="1.6" height="1.4"/><rect x="7.6" y="7.5" width="1.6" height="1.4"/></g></g></svg><div class="t" style="left:67px;top:181.55px;font-size:10px;color:#eceff1;line-height:1">Gauss1 Data</div><svg class="a" style="left:36.5px;top:200.85px;overflow:visible;" width="6" height="9" viewBox="0 0 6 9"><path d="M0.8 0.6L4.8 4.5L0.8 8.4" fill="none" stroke="#c8cbce" stroke-width="1.15"/></svg><div class="a" style="left:43.2px;top:204.85px;width:3.5px;height:1px;background:#45484c;"></div><svg class="a" style="left:50.1px;top:199.75px;overflow:visible;" width="11" height="11" viewBox="0 0 11 11"><g fill="none" stroke="#e6e8ea" stroke-width="1.2"><path d="M0.8 9.5V2.6L2.6 0.8H9.2Q10.2 0.8 10.2 1.8V3.5" stroke-width="1.3"/><path d="M0.6 2.8L2.8 0.6V2.8z" fill="#e6e8ea" stroke="none"/><path d="M3.5 2.8V9.2H10.3" stroke-width="1.2"/><path d="M3.5 6.2L6.5 3.5L8 4.6L9.8 3.2 M3.5 6.2L5.8 8.4L7.6 7.2L9.5 8.8" stroke-width="1.1"/><path d="M0.8 9.5H3" stroke-width="1.3"/></g></svg><div class="t" style="left:67px;top:201.05px;font-size:10px;color:#eceff1;line-height:1">Gauss1 Fit</div><div class="a" style="left:39px;top:224.35px;width:7.5px;height:1px;background:#45484c;"></div><svg class="a" style="left:51.0px;top:219.25px;overflow:visible;" width="11" height="11" viewBox="0 0 11 11"><g fill="none" stroke="#e6e8ea" stroke-width="1.2"><path d="M6.8 0.6H0.7V10.3H5.5 M8.5 3.5V6.3" stroke-width="1.4"/><path d="M6.2 0.3L9 3.2H6.2z" fill="#e6e8ea" stroke="none"/><path d="M8 7v3.5 M6.3 8.8h3.5" stroke-width="1.4"/></g></svg><div class="t" style="left:67px;top:220.55px;font-size:10px;color:#eceff1;line-height:1">Gauss2</div><svg class="a" style="left:36.5px;top:239.85px;overflow:visible;" width="6" height="9" viewBox="0 0 6 9"><path d="M0.8 0.6L4.8 4.5L0.8 8.4" fill="none" stroke="#c8cbce" stroke-width="1.15"/></svg><div class="a" style="left:43.2px;top:243.85px;width:3.5px;height:1px;background:#45484c;"></div><svg class="a" style="left:50.1px;top:238.75px;overflow:visible;" width="11" height="11" viewBox="0 0 11 11"><g fill="none" stroke="#e6e8ea" stroke-width="1.2"><rect x="0" y="0" width="10.2" height="10" fill="#e6e8ea" stroke="none"/><path d="M0.5 0.5h5v3h-5z" fill="#9fd0f0" stroke="none"/><g fill="#141517" stroke="none"><rect x="2.2" y="1.8" width="1.6" height="1.4"/><rect x="5.2" y="1.8" width="1.6" height="1.4" fill="#2a3a48"/><rect x="7.6" y="1.8" width="1.6" height="1.4"/><rect x="2.2" y="4.6" width="1.6" height="1.4"/><rect x="5.2" y="4.6" width="1.6" height="1.4"/><rect x="7.6" y="4.6" width="1.6" height="1.4"/><rect x="2.2" y="7.5" width="1.6" height="1.4"/><rect x="5.2" y="7.5" width="1.6" height="1.4"/><rect x="7.6" y="7.5" width="1.6" height="1.4"/></g></g></svg><div class="t" style="left:67px;top:240.05px;font-size:10px;color:#eceff1;line-height:1">Gauss2 Data</div><svg class="a" style="left:36.5px;top:259.35px;overflow:visible;" width="6" height="9" viewBox="0 0 6 9"><path d="M0.8 0.6L4.8 4.5L0.8 8.4" fill="none" stroke="#c8cbce" stroke-width="1.15"/></svg><div class="a" style="left:43.2px;top:263.35px;width:3.5px;height:1px;background:#45484c;"></div><svg class="a" style="left:50.1px;top:258.25px;overflow:visible;" width="11" height="11" viewBox="0 0 11 11"><g fill="none" stroke="#e6e8ea" stroke-width="1.2"><path d="M0.8 9.5V2.6L2.6 0.8H9.2Q10.2 0.8 10.2 1.8V3.5" stroke-width="1.3"/><path d="M0.6 2.8L2.8 0.6V2.8z" fill="#e6e8ea" stroke="none"/><path d="M3.5 2.8V9.2H10.3" stroke-width="1.2"/><path d="M3.5 6.2L6.5 3.5L8 4.6L9.8 3.2 M3.5 6.2L5.8 8.4L7.6 7.2L9.5 8.8" stroke-width="1.1"/><path d="M0.8 9.5H3" stroke-width="1.3"/></g></svg><div class="t" style="left:67px;top:259.55px;font-size:10px;color:#eceff1;line-height:1">Gauss2 Fit</div><div class="a" style="left:39px;top:282.85px;width:7.5px;height:1px;background:#45484c;"></div><svg class="a" style="left:51.0px;top:277.75px;overflow:visible;" width="11" height="11" viewBox="0 0 11 11"><g fill="none" stroke="#e6e8ea" stroke-width="1.2"><path d="M6.8 0.6H0.7V10.3H5.5 M8.5 3.5V6.3" stroke-width="1.4"/><path d="M6.2 0.3L9 3.2H6.2z" fill="#e6e8ea" stroke="none"/><path d="M8 7v3.5 M6.3 8.8h3.5" stroke-width="1.4"/></g></svg><div class="t" style="left:67px;top:279.05px;font-size:10px;color:#eceff1;line-height:1">DanWood</div><svg class="a" style="left:36.5px;top:298.35px;overflow:visible;" width="6" height="9" viewBox="0 0 6 9"><path d="M0.8 0.6L4.8 4.5L0.8 8.4" fill="none" stroke="#c8cbce" stroke-width="1.15"/></svg><div class="a" style="left:43.2px;top:302.35px;width:3.5px;height:1px;background:#45484c;"></div><svg class="a" style="left:50.1px;top:297.25px;overflow:visible;" width="11" height="11" viewBox="0 0 11 11"><g fill="none" stroke="#e6e8ea" stroke-width="1.2"><rect x="0" y="0" width="10.2" height="10" fill="#e6e8ea" stroke="none"/><path d="M0.5 0.5h5v3h-5z" fill="#9fd0f0" stroke="none"/><g fill="#141517" stroke="none"><rect x="2.2" y="1.8" width="1.6" height="1.4"/><rect x="5.2" y="1.8" width="1.6" height="1.4" fill="#2a3a48"/><rect x="7.6" y="1.8" width="1.6" height="1.4"/><rect x="2.2" y="4.6" width="1.6" height="1.4"/><rect x="5.2" y="4.6" width="1.6" height="1.4"/><rect x="7.6" y="4.6" width="1.6" height="1.4"/><rect x="2.2" y="7.5" width="1.6" height="1.4"/><rect x="5.2" y="7.5" width="1.6" height="1.4"/><rect x="7.6" y="7.5" width="1.6" height="1.4"/></g></g></svg><div class="t" style="left:67px;top:298.55px;font-size:10px;color:#eceff1;line-height:1">DanWood Data</div><svg class="a" style="left:36.5px;top:317.85px;overflow:visible;" width="6" height="9" viewBox="0 0 6 9"><path d="M0.8 0.6L4.8 4.5L0.8 8.4" fill="none" stroke="#c8cbce" stroke-width="1.15"/></svg><div class="a" style="left:43.2px;top:321.85px;width:3.5px;height:1px;background:#45484c;"></div><svg class="a" style="left:50.1px;top:316.75px;overflow:visible;" width="11" height="11" viewBox="0 0 11 11"><g fill="none" stroke="#e6e8ea" stroke-width="1.2"><path d="M0.8 9.5V2.6L2.6 0.8H9.2Q10.2 0.8 10.2 1.8V3.5" stroke-width="1.3"/><path d="M0.6 2.8L2.8 0.6V2.8z" fill="#e6e8ea" stroke="none"/><path d="M3.5 2.8V9.2H10.3" stroke-width="1.2"/><path d="M3.5 6.2L6.5 3.5L8 4.6L9.8 3.2 M3.5 6.2L5.8 8.4L7.6 7.2L9.5 8.8" stroke-width="1.1"/><path d="M0.8 9.5H3" stroke-width="1.3"/></g></svg><div class="t" style="left:67px;top:318.05px;font-size:10px;color:#eceff1;line-height:1">DanWood Fit</div><div class="a" style="left:39px;top:341.35px;width:7.5px;height:1px;background:#45484c;"></div><svg class="a" style="left:51.0px;top:336.25px;overflow:visible;" width="11" height="11" viewBox="0 0 11 11"><g fill="none" stroke="#e6e8ea" stroke-width="1.2"><path d="M6.8 0.6H0.7V10.3H5.5 M8.5 3.5V6.3" stroke-width="1.4"/><path d="M6.2 0.3L9 3.2H6.2z" fill="#e6e8ea" stroke="none"/><path d="M8 7v3.5 M6.3 8.8h3.5" stroke-width="1.4"/></g></svg><div class="t" style="left:67px;top:337.55px;font-size:10px;color:#eceff1;line-height:1">Misra1b</div><svg class="a" style="left:36.5px;top:356.85px;overflow:visible;" width="6" height="9" viewBox="0 0 6 9"><path d="M0.8 0.6L4.8 4.5L0.8 8.4" fill="none" stroke="#c8cbce" stroke-width="1.15"/></svg><div class="a" style="left:43.2px;top:360.85px;width:3.5px;height:1px;background:#45484c;"></div><svg class="a" style="left:50.1px;top:355.75px;overflow:visible;" width="11" height="11" viewBox="0 0 11 11"><g fill="none" stroke="#e6e8ea" stroke-width="1.2"><rect x="0" y="0" width="10.2" height="10" fill="#e6e8ea" stroke="none"/><path d="M0.5 0.5h5v3h-5z" fill="#9fd0f0" stroke="none"/><g fill="#141517" stroke="none"><rect x="2.2" y="1.8" width="1.6" height="1.4"/><rect x="5.2" y="1.8" width="1.6" height="1.4" fill="#2a3a48"/><rect x="7.6" y="1.8" width="1.6" height="1.4"/><rect x="2.2" y="4.6" width="1.6" height="1.4"/><rect x="5.2" y="4.6" width="1.6" height="1.4"/><rect x="7.6" y="4.6" width="1.6" height="1.4"/><rect x="2.2" y="7.5" width="1.6" height="1.4"/><rect x="5.2" y="7.5" width="1.6" height="1.4"/><rect x="7.6" y="7.5" width="1.6" height="1.4"/></g></g></svg><div class="t" style="left:67px;top:357.05px;font-size:10px;color:#eceff1;line-height:1">Misra1b Data</div><svg class="a" style="left:36.5px;top:376.35px;overflow:visible;" width="6" height="9" viewBox="0 0 6 9"><path d="M0.8 0.6L4.8 4.5L0.8 8.4" fill="none" stroke="#c8cbce" stroke-width="1.15"/></svg><div class="a" style="left:43.2px;top:380.35px;width:3.5px;height:1px;background:#45484c;"></div><svg class="a" style="left:50.1px;top:375.25px;overflow:visible;" width="11" height="11" viewBox="0 0 11 11"><g fill="none" stroke="#e6e8ea" stroke-width="1.2"><path d="M0.8 9.5V2.6L2.6 0.8H9.2Q10.2 0.8 10.2 1.8V3.5" stroke-width="1.3"/><path d="M0.6 2.8L2.8 0.6V2.8z" fill="#e6e8ea" stroke="none"/><path d="M3.5 2.8V9.2H10.3" stroke-width="1.2"/><path d="M3.5 6.2L6.5 3.5L8 4.6L9.8 3.2 M3.5 6.2L5.8 8.4L7.6 7.2L9.5 8.8" stroke-width="1.1"/><path d="M0.8 9.5H3" stroke-width="1.3"/></g></svg><div class="t" style="left:67px;top:376.55px;font-size:10px;color:#eceff1;line-height:1">Misra1b Fit</div><svg class="a" style="left:34px;top:397.85px;overflow:visible;" width="9" height="6" viewBox="0 0 9 6"><path d="M0.6 0.8L4.5 4.8L8.4 0.8" fill="none" stroke="#c8cbce" stroke-width="1.15"/></svg><div class="a" style="left:43.2px;top:399.85px;width:3.5px;height:1px;background:#45484c;"></div><svg class="a" style="left:50.1px;top:394.75px;overflow:visible;" width="11" height="11" viewBox="0 0 11 11"><g fill="none" stroke="#e6e8ea" stroke-width="1.2"><path d="M0.8 9.5V2.6L2.6 0.8H9.2Q10.2 0.8 10.2 1.8V3.5" stroke-width="1.3"/><path d="M0.6 2.8L2.8 0.6V2.8z" fill="#e6e8ea" stroke="none"/><path d="M3.5 2.8V9.2H10.3" stroke-width="1.2"/><path d="M3.5 6.2L6.5 3.5L8 4.6L9.8 3.2 M3.5 6.2L5.8 8.4L7.6 7.2L9.5 8.8" stroke-width="1.1"/><path d="M0.8 9.5H3" stroke-width="1.3"/></g></svg><div class="t" style="left:67px;top:396.05px;font-size:10px;color:#eceff1;line-height:1">All Fits</div><svg class="a" style="left:52.5px;top:415.35px;overflow:visible;" width="6" height="9" viewBox="0 0 6 9"><path d="M0.8 0.6L4.8 4.5L0.8 8.4" fill="none" stroke="#c8cbce" stroke-width="1.15"/></svg><div class="a" style="left:59.2px;top:419.35px;width:3.5px;height:1px;background:#45484c;"></div><svg class="a" style="left:66.3px;top:414.25px;overflow:visible;" width="11" height="11" viewBox="0 0 11 11"><g fill="none" stroke="#e6e8ea" stroke-width="1.2"><path d="M0.7 0.3V9.9H10.3" stroke-width="1.3"/><path d="M0.9 5.6L3.8 2.6L5.6 3.8L8 1L9.8 2 M0.9 5.6L3.8 8.2L5.8 7L7.5 8.4L9.8 8.2" stroke-width="1.15"/></g></svg><div class="t" style="left:82px;top:415.55px;font-size:10px;color:#eceff1;line-height:1">Misra1a</div><svg class="a" style="left:52.5px;top:434.85px;overflow:visible;" width="6" height="9" viewBox="0 0 6 9"><path d="M0.8 0.6L4.8 4.5L0.8 8.4" fill="none" stroke="#c8cbce" stroke-width="1.15"/></svg><div class="a" style="left:59.2px;top:438.85px;width:3.5px;height:1px;background:#45484c;"></div><svg class="a" style="left:66.3px;top:433.75px;overflow:visible;" width="11" height="11" viewBox="0 0 11 11"><g fill="none" stroke="#e6e8ea" stroke-width="1.2"><path d="M0.7 0.3V9.9H10.3" stroke-width="1.3"/><path d="M0.9 5.6L3.8 2.6L5.6 3.8L8 1L9.8 2 M0.9 5.6L3.8 8.2L5.8 7L7.5 8.4L9.8 8.2" stroke-width="1.15"/></g></svg><div class="t" style="left:82px;top:435.05px;font-size:10px;color:#eceff1;line-height:1">Chwirut2</div><svg class="a" style="left:50px;top:456.35px;overflow:visible;" width="9" height="6" viewBox="0 0 9 6"><path d="M0.6 0.8L4.5 4.8L8.4 0.8" fill="none" stroke="#c8cbce" stroke-width="1.15"/></svg><div class="a" style="left:59.2px;top:458.35px;width:3.5px;height:1px;background:#45484c;"></div><svg class="a" style="left:66.3px;top:453.25px;overflow:visible;" width="11" height="11" viewBox="0 0 11 11"><g fill="none" stroke="#e6e8ea" stroke-width="1.2"><path d="M0.7 0.3V9.9H10.3" stroke-width="1.3"/><path d="M0.9 5.6L3.8 2.6L5.6 3.8L8 1L9.8 2 M0.9 5.6L3.8 8.2L5.8 7L7.5 8.4L9.8 8.2" stroke-width="1.15"/></g></svg><div class="t" style="left:82px;top:454.55px;font-size:10px;color:#eceff1;line-height:1">Chwirut1</div>
</div>
<div class="a" style="left:220px;top:104px;width:16px;height:502px;background:#18191b;"></div>
<div class="a" style="left:36px;top:590px;width:200px;height:16px;background:#18191b;"></div>
<div class="a" style="left:36px;top:104px;width:184.5px;height:487px;box-sizing:border-box;border-right:1px solid #45484c;border-bottom:1px solid #45484c;border-bottom-right-radius:2px;"></div>
<div class="a" style="left:225px;top:170px;width:6px;height:239px;background:#4d5155;border-radius:3px;"></div>
<div class="a" style="left:38px;top:595px;width:121px;height:7px;background:#4d5155;border-radius:3.5px;"></div>
<div class="a" style="left:235px;top:60px;width:618px;height:18px;background:#1d1f22;"></div>
<div class="a" style="left:237px;top:63px;width:54px;height:15px;background:#3daee9;"></div>
<div class="t" style="left:243px;top:65.73px;font-size:10px;line-height:1;color:#15405e;text-shadow:0.3px 0 0 #15405e;">All Fits</div>
<svg class="a" style="left:277.25px;top:66.75px;overflow:visible;" width="6.5" height="6.5" viewBox="0 0 6.5 6.5"><path d="M0 0L6.5 6.5M6.5 0L0 6.5" stroke="#e8f6ff" stroke-width="1.05"/></svg>
<div class="a" style="left:237px;top:78px;width:616px;height:2px;background:#3b9fd6;"></div>
<div class="a" style="left:235px;top:80px;width:618px;height:526px;background:#202326;"></div>
<div class="a" style="left:281px;top:80px;width:525px;height:526px;background:#ffffff;"></div>
<svg class="a" style="left:281px;top:80px;will-change:transform" width="525" height="526" viewBox="281 80 525 526" font-family="Liberation Sans, sans-serif">
<text x="536.9" y="97.6" text-anchor="middle" font-size="12.6" fill="#1a1a1a">Lowel Level of Difficulty</text>
<rect x="320.50" y="111.20" width="210.80" height="83.10" fill="none" stroke="#2b2b2b" stroke-width="1.25"/><path d="M320.50 194.30v-6M346.85 194.30v-3.5M373.20 194.30v-6M399.55 194.30v-3.5M425.90 194.30v-6M452.25 194.30v-3.5M478.60 194.30v-6M504.95 194.30v-3.5M531.30 194.30v-6M320.50 194.30h6M320.50 180.45h3.5M320.50 166.60h6M320.50 152.75h3.5M320.50 138.90h6M320.50 125.05h3.5M320.50 111.20h6" stroke="#2b2b2b" stroke-width="1.1" fill="none"/><g font-size="10.5" fill="#262626"><text x="320.50" y="210.20" text-anchor="middle">0</text><text x="373.20" y="210.20" text-anchor="middle">200</text><text x="425.90" y="210.20" text-anchor="middle">400</text><text x="478.60" y="210.20" text-anchor="middle">600</text><text x="531.30" y="210.20" text-anchor="middle">800</text><text x="316.50" y="201.10" text-anchor="end">0</text><text x="316.50" y="173.40" text-anchor="end">30</text><text x="316.50" y="145.70" text-anchor="end">60</text><text x="316.50" y="118.00" text-anchor="end">90</text></g><text x="412.60" y="124.10" text-anchor="middle" font-size="12.2" fill="#1a1a1a">Misra1a</text><text x="0" y="0" transform="translate(301.20 152.75) rotate(-90)" text-anchor="middle" font-size="12.5" fill="#262626">y</text><clipPath id="cMisra1a"><rect x="317.50" y="108.20" width="216.80" height="89.10"/></clipPath><g clip-path="url(#cMisra1a)"><g fill="#2d5fa8"><circle cx="340.9" cy="185.0" r="2.6"/><circle cx="350.8" cy="180.7" r="2.6"/><circle cx="357.7" cy="177.7" r="2.6"/><circle cx="370.8" cy="172.2" r="2.6"/><circle cx="383.7" cy="167.0" r="2.6"/><circle cx="396.7" cy="161.8" r="2.6"/><circle cx="408.2" cy="157.3" r="2.6"/><circle cx="420.2" cy="152.9" r="2.6"/><circle cx="435.1" cy="147.4" r="2.6"/><circle cx="446.3" cy="143.5" r="2.6"/><circle cx="461.9" cy="138.0" r="2.6"/><circle cx="476.8" cy="133.0" r="2.6"/><circle cx="502.1" cy="124.6" r="2.6"/><circle cx="520.8" cy="118.8" r="2.6"/></g><path d="M340.9 185.1L343.9 183.8L346.9 182.5L349.9 181.1L352.9 179.9L355.9 178.6L358.9 177.3L361.9 176.0L364.9 174.8L367.9 173.5L370.9 172.3L373.9 171.0L376.9 169.8L379.9 168.6L382.9 167.3L385.9 166.1L388.9 164.9L391.9 163.7L394.9 162.6L397.9 161.4L400.9 160.2L403.9 159.0L406.9 157.9L409.9 156.7L412.9 155.6L415.9 154.5L418.9 153.3L421.9 152.2L424.9 151.1L427.9 150.0L430.9 148.9L433.9 147.8L436.8 146.7L439.8 145.6L442.8 144.6L445.8 143.5L448.8 142.4L451.8 141.4L454.8 140.3L457.8 139.3L460.8 138.3L463.8 137.2L466.8 136.2L469.8 135.2L472.8 134.2L475.8 133.2L478.8 132.2L481.8 131.2L484.8 130.2L487.8 129.3L490.8 128.3L493.8 127.3L496.8 126.4L499.8 125.4L502.8 124.5L505.8 123.5L508.8 122.6L511.8 121.7L514.8 120.7L517.8 119.8L520.8 118.9" stroke="#eb9b5a" stroke-width="1.1" fill="none"/></g><rect x="583.60" y="111.20" width="210.40" height="83.10" fill="none" stroke="#2b2b2b" stroke-width="1.25"/><path d="M583.60 194.30v-6M618.67 194.30v-3.5M653.73 194.30v-6M688.80 194.30v-3.5M723.87 194.30v-6M758.93 194.30v-3.5M794.00 194.30v-6M583.60 194.30h6M583.60 185.99h3.5M583.60 177.68h6M583.60 169.37h3.5M583.60 161.06h6M583.60 152.75h3.5M583.60 144.44h6M583.60 136.13h3.5M583.60 127.82h6M583.60 119.51h3.5M583.60 111.20h6" stroke="#2b2b2b" stroke-width="1.1" fill="none"/><g font-size="10.5" fill="#262626"><text x="583.60" y="210.20" text-anchor="middle">0</text><text x="653.73" y="210.20" text-anchor="middle">2</text><text x="723.87" y="210.20" text-anchor="middle">4</text><text x="794.00" y="210.20" text-anchor="middle">6</text><text x="579.60" y="201.10" text-anchor="end">0</text><text x="579.60" y="184.48" text-anchor="end">20</text><text x="579.60" y="167.86" text-anchor="end">40</text><text x="579.60" y="151.24" text-anchor="end">60</text><text x="579.60" y="134.62" text-anchor="end">80</text><text x="579.60" y="118.00" text-anchor="end">100</text></g><text x="675.70" y="124.10" text-anchor="middle" font-size="12.2" fill="#1a1a1a">Chwirut2</text><clipPath id="cChwirut2"><rect x="580.60" y="108.20" width="216.40" height="89.10"/></clipPath><g clip-path="url(#cChwirut2)"><g fill="#2270d6"><circle cx="601.1" cy="117.1" r="2.7"/><circle cx="618.7" cy="146.8" r="2.7"/><circle cx="645.0" cy="168.5" r="2.7"/><circle cx="715.1" cy="184.7" r="2.7"/><circle cx="785.2" cy="187.6" r="2.7"/><circle cx="614.3" cy="141.4" r="2.7"/><circle cx="662.5" cy="176.5" r="2.7"/><circle cx="697.6" cy="182.5" r="2.7"/><circle cx="767.7" cy="187.3" r="2.7"/><circle cx="609.9" cy="141.3" r="2.7"/><circle cx="645.0" cy="172.0" r="2.7"/><circle cx="680.0" cy="180.6" r="2.7"/><circle cx="750.2" cy="188.4" r="2.7"/><circle cx="605.5" cy="138.4" r="2.7"/><circle cx="627.4" cy="160.2" r="2.7"/><circle cx="662.5" cy="176.7" r="2.7"/><circle cx="732.6" cy="187.5" r="2.7"/><circle cx="601.1" cy="126.6" r="2.7"/><circle cx="688.8" cy="183.4" r="2.7"/><circle cx="609.9" cy="144.5" r="2.7"/><circle cx="688.8" cy="182.2" r="2.7"/><circle cx="636.2" cy="167.0" r="2.7"/><circle cx="794.0" cy="189.8" r="2.7"/><circle cx="688.8" cy="183.9" r="2.7"/><circle cx="794.0" cy="189.8" r="2.7"/><circle cx="636.2" cy="167.7" r="2.7"/><circle cx="688.8" cy="182.7" r="2.7"/><circle cx="601.1" cy="131.3" r="2.7"/><circle cx="653.7" cy="177.7" r="2.7"/><circle cx="723.9" cy="185.6" r="2.7"/><circle cx="609.9" cy="144.9" r="2.7"/><circle cx="653.7" cy="176.3" r="2.7"/><circle cx="758.9" cy="187.2" r="2.7"/><circle cx="609.9" cy="142.8" r="2.7"/><circle cx="662.5" cy="177.5" r="2.7"/><circle cx="715.1" cy="187.9" r="2.7"/><circle cx="785.2" cy="191.2" r="2.7"/><circle cx="688.8" cy="184.5" r="2.7"/><circle cx="609.9" cy="148.8" r="2.7"/><circle cx="671.3" cy="174.6" r="2.7"/><circle cx="723.9" cy="184.7" r="2.7"/><circle cx="609.9" cy="143.4" r="2.7"/><circle cx="671.3" cy="179.6" r="2.7"/><circle cx="723.9" cy="187.0" r="2.7"/><circle cx="609.9" cy="145.1" r="2.7"/><circle cx="671.3" cy="180.8" r="2.7"/><circle cx="723.9" cy="187.1" r="2.7"/><circle cx="601.1" cy="127.0" r="2.7"/><circle cx="794.0" cy="190.3" r="2.7"/><circle cx="688.8" cy="182.2" r="2.7"/><circle cx="601.1" cy="126.4" r="2.7"/><circle cx="680.0" cy="180.0" r="2.7"/><circle cx="601.1" cy="126.7" r="2.7"/><circle cx="645.0" cy="170.3" r="2.7"/></g><path d="M601.1 126.3L602.4 129.3L603.7 132.0L605.0 134.6L606.3 137.0L607.6 139.2L608.8 141.3L610.1 143.3L611.4 145.1L612.7 146.8L614.0 148.5L615.3 150.0L616.6 151.5L617.8 152.8L619.1 154.1L620.4 155.4L621.7 156.5L623.0 157.7L624.3 158.7L625.6 159.7L626.8 160.7L628.1 161.6L629.4 162.5L630.7 163.4L632.0 164.2L633.3 165.0L634.6 165.7L635.8 166.4L637.1 167.1L638.4 167.8L639.7 168.4L641.0 169.0L642.3 169.6L643.6 170.2L644.8 170.8L646.1 171.3L647.4 171.8L648.7 172.3L650.0 172.8L651.3 173.2L652.6 173.7L653.9 174.1L655.1 174.5L656.4 175.0L657.7 175.4L659.0 175.7L660.3 176.1L661.6 176.5L662.9 176.8L664.1 177.2L665.4 177.5L666.7 177.8L668.0 178.1L669.3 178.4L670.6 178.7L671.9 179.0L673.1 179.3L674.4 179.6L675.7 179.8L677.0 180.1L678.3 180.3L679.6 180.6L680.9 180.8L682.1 181.1L683.4 181.3L684.7 181.5L686.0 181.7L687.3 181.9L688.6 182.1L689.9 182.4L691.1 182.5L692.4 182.7L693.7 182.9L695.0 183.1L696.3 183.3L697.6 183.5L698.9 183.6L700.1 183.8L701.4 184.0L702.7 184.1L704.0 184.3L705.3 184.4L706.6 184.6L707.9 184.7L709.1 184.9L710.4 185.0L711.7 185.2L713.0 185.3L714.3 185.4L715.6 185.6L716.9 185.7L718.1 185.8L719.4 186.0L720.7 186.1L722.0 186.2L723.3 186.3L724.6 186.4L725.9 186.5L727.1 186.6L728.4 186.8L729.7 186.9L731.0 187.0L732.3 187.1L733.6 187.2L734.9 187.3L736.1 187.4L737.4 187.5L738.7 187.5L740.0 187.6L741.3 187.7L742.6 187.8L743.9 187.9L745.1 188.0L746.4 188.1L747.7 188.2L749.0 188.2L750.3 188.3L751.6 188.4L752.9 188.5L754.1 188.5L755.4 188.6L756.7 188.7L758.0 188.8L759.3 188.8L760.6 188.9L761.9 189.0L763.1 189.0L764.4 189.1L765.7 189.2L767.0 189.2L768.3 189.3L769.6 189.4L770.9 189.4L772.1 189.5L773.4 189.5L774.7 189.6L776.0 189.7L777.3 189.7L778.6 189.8L779.9 189.8L781.1 189.9L782.4 189.9L783.7 190.0L785.0 190.0L786.3 190.1L787.6 190.1L788.9 190.2L790.1 190.2L791.4 190.3L792.7 190.3L794.0 190.4" stroke="#eb9b5a" stroke-width="1.1" fill="none"/></g><rect x="320.50" y="235.90" width="210.80" height="83.40" fill="none" stroke="#2b2b2b" stroke-width="1.25"/><path d="M320.50 319.30v-6M355.63 319.30v-3.5M390.77 319.30v-6M425.90 319.30v-3.5M461.03 319.30v-6M496.17 319.30v-3.5M531.30 319.30v-6M320.50 319.30h6M320.50 310.96h3.5M320.50 302.62h6M320.50 294.28h3.5M320.50 285.94h6M320.50 277.60h3.5M320.50 269.26h6M320.50 260.92h3.5M320.50 252.58h6M320.50 244.24h3.5M320.50 235.90h6" stroke="#2b2b2b" stroke-width="1.1" fill="none"/><g font-size="10.5" fill="#262626"><text x="320.50" y="335.20" text-anchor="middle">0</text><text x="390.77" y="335.20" text-anchor="middle">2</text><text x="461.03" y="335.20" text-anchor="middle">4</text><text x="531.30" y="335.20" text-anchor="middle">6</text><text x="316.50" y="326.10" text-anchor="end">0</text><text x="316.50" y="309.42" text-anchor="end">20</text><text x="316.50" y="292.74" text-anchor="end">40</text><text x="316.50" y="276.06" text-anchor="end">60</text><text x="316.50" y="259.38" text-anchor="end">80</text><text x="316.50" y="242.70" text-anchor="end">100</text></g><text x="412.40" y="248.80" text-anchor="middle" font-size="12.2" fill="#1a1a1a">Chwirut1</text><text x="0" y="0" transform="translate(296.50 277.60) rotate(-90)" text-anchor="middle" font-size="12.5" fill="#262626">y</text><clipPath id="cChwirut1"><rect x="317.50" y="232.90" width="216.80" height="89.40"/></clipPath><g clip-path="url(#cChwirut1)"><g fill="#2270d6"><circle cx="338.1" cy="252.4" r="2.8"/><circle cx="338.1" cy="248.4" r="2.8"/><circle cx="338.1" cy="256.0" r="2.8"/><circle cx="338.1" cy="249.3" r="2.8"/><circle cx="338.1" cy="253.7" r="2.8"/><circle cx="338.1" cy="253.7" r="2.8"/><circle cx="338.1" cy="246.1" r="2.8"/><circle cx="338.1" cy="252.2" r="2.8"/><circle cx="338.1" cy="252.9" r="2.8"/><circle cx="338.1" cy="250.2" r="2.8"/><circle cx="338.1" cy="248.8" r="2.8"/><circle cx="338.1" cy="252.9" r="2.8"/><circle cx="338.1" cy="250.7" r="2.8"/><circle cx="338.1" cy="256.2" r="2.8"/><circle cx="342.5" cy="262.2" r="2.8"/><circle cx="342.5" cy="262.4" r="2.8"/><circle cx="342.5" cy="265.2" r="2.8"/><circle cx="342.5" cy="265.8" r="2.8"/><circle cx="342.5" cy="266.1" r="2.8"/><circle cx="342.5" cy="261.8" r="2.8"/><circle cx="342.5" cy="261.6" r="2.8"/><circle cx="342.5" cy="262.1" r="2.8"/><circle cx="346.9" cy="267.6" r="2.8"/><circle cx="346.9" cy="271.5" r="2.8"/><circle cx="346.9" cy="268.0" r="2.8"/><circle cx="346.9" cy="267.1" r="2.8"/><circle cx="346.9" cy="265.6" r="2.8"/><circle cx="346.9" cy="270.1" r="2.8"/><circle cx="346.9" cy="268.9" r="2.8"/><circle cx="346.9" cy="273.4" r="2.8"/><circle cx="346.9" cy="269.2" r="2.8"/><circle cx="346.9" cy="274.0" r="2.8"/><circle cx="346.9" cy="271.8" r="2.8"/><circle cx="346.9" cy="264.7" r="2.8"/><circle cx="346.9" cy="274.0" r="2.8"/><circle cx="346.9" cy="265.5" r="2.8"/><circle cx="351.2" cy="272.4" r="2.8"/><circle cx="351.2" cy="274.1" r="2.8"/><circle cx="351.2" cy="272.1" r="2.8"/><circle cx="351.2" cy="271.9" r="2.8"/><circle cx="351.2" cy="270.6" r="2.8"/><circle cx="351.2" cy="273.9" r="2.8"/><circle cx="351.2" cy="274.8" r="2.8"/><circle cx="351.2" cy="274.8" r="2.8"/><circle cx="355.6" cy="280.3" r="2.8"/><circle cx="355.6" cy="278.0" r="2.8"/><circle cx="355.6" cy="279.8" r="2.8"/><circle cx="355.6" cy="275.4" r="2.8"/><circle cx="355.6" cy="282.3" r="2.8"/><circle cx="355.6" cy="280.5" r="2.8"/><circle cx="355.6" cy="280.2" r="2.8"/><circle cx="355.6" cy="282.9" r="2.8"/><circle cx="355.6" cy="273.4" r="2.8"/><circle cx="355.6" cy="283.6" r="2.8"/><circle cx="355.6" cy="278.6" r="2.8"/><circle cx="355.6" cy="279.2" r="2.8"/><circle cx="364.4" cy="281.9" r="2.8"/><circle cx="364.4" cy="289.3" r="2.8"/><circle cx="364.4" cy="283.0" r="2.8"/><circle cx="364.4" cy="286.7" r="2.8"/><circle cx="364.4" cy="285.5" r="2.8"/><circle cx="364.4" cy="286.6" r="2.8"/><circle cx="364.4" cy="283.9" r="2.8"/><circle cx="364.4" cy="287.5" r="2.8"/><circle cx="373.2" cy="290.9" r="2.8"/><circle cx="373.2" cy="290.1" r="2.8"/><circle cx="373.2" cy="287.4" r="2.8"/><circle cx="373.2" cy="295.0" r="2.8"/><circle cx="373.2" cy="288.0" r="2.8"/><circle cx="373.2" cy="289.0" r="2.8"/><circle cx="373.2" cy="291.6" r="2.8"/><circle cx="373.2" cy="290.2" r="2.8"/><circle cx="373.2" cy="291.5" r="2.8"/><circle cx="373.2" cy="287.8" r="2.8"/><circle cx="373.2" cy="290.3" r="2.8"/><circle cx="373.2" cy="291.1" r="2.8"/><circle cx="382.0" cy="295.3" r="2.8"/><circle cx="382.0" cy="295.3" r="2.8"/><circle cx="382.0" cy="295.2" r="2.8"/><circle cx="382.0" cy="296.4" r="2.8"/><circle cx="382.0" cy="291.7" r="2.8"/><circle cx="382.0" cy="298.0" r="2.8"/><circle cx="382.0" cy="300.7" r="2.8"/><circle cx="382.0" cy="295.2" r="2.8"/><circle cx="382.0" cy="295.2" r="2.8"/><circle cx="382.0" cy="294.4" r="2.8"/><circle cx="390.8" cy="298.6" r="2.8"/><circle cx="390.8" cy="298.6" r="2.8"/><circle cx="390.8" cy="297.9" r="2.8"/><circle cx="390.8" cy="296.9" r="2.8"/><circle cx="390.8" cy="299.0" r="2.8"/><circle cx="390.8" cy="298.9" r="2.8"/><circle cx="390.8" cy="295.5" r="2.8"/><circle cx="390.8" cy="297.6" r="2.8"/><circle cx="390.8" cy="299.8" r="2.8"/><circle cx="390.8" cy="295.0" r="2.8"/><circle cx="399.5" cy="300.1" r="2.8"/><circle cx="399.5" cy="301.9" r="2.8"/><circle cx="399.5" cy="302.6" r="2.8"/><circle cx="399.5" cy="300.7" r="2.8"/><circle cx="399.5" cy="302.2" r="2.8"/><circle cx="399.5" cy="302.5" r="2.8"/><circle cx="399.5" cy="302.8" r="2.8"/><circle cx="399.5" cy="301.7" r="2.8"/><circle cx="408.3" cy="302.0" r="2.8"/><circle cx="408.3" cy="303.9" r="2.8"/><circle cx="408.3" cy="305.1" r="2.8"/><circle cx="408.3" cy="302.5" r="2.8"/><circle cx="408.3" cy="303.3" r="2.8"/><circle cx="408.3" cy="302.3" r="2.8"/><circle cx="408.3" cy="301.9" r="2.8"/><circle cx="408.3" cy="303.5" r="2.8"/><circle cx="408.3" cy="303.5" r="2.8"/><circle cx="408.3" cy="303.4" r="2.8"/><circle cx="417.1" cy="306.5" r="2.8"/><circle cx="417.1" cy="304.5" r="2.8"/><circle cx="417.1" cy="303.7" r="2.8"/><circle cx="417.1" cy="305.0" r="2.8"/><circle cx="417.1" cy="305.5" r="2.8"/><circle cx="417.1" cy="305.5" r="2.8"/><circle cx="417.1" cy="306.1" r="2.8"/><circle cx="417.1" cy="306.1" r="2.8"/><circle cx="425.9" cy="307.2" r="2.8"/><circle cx="425.9" cy="307.7" r="2.8"/><circle cx="425.9" cy="307.3" r="2.8"/><circle cx="425.9" cy="308.5" r="2.8"/><circle cx="425.9" cy="306.4" r="2.8"/><circle cx="425.9" cy="306.8" r="2.8"/><circle cx="425.9" cy="308.0" r="2.8"/><circle cx="425.9" cy="309.2" r="2.8"/><circle cx="425.9" cy="306.8" r="2.8"/><circle cx="425.9" cy="305.6" r="2.8"/><circle cx="425.9" cy="307.6" r="2.8"/><circle cx="425.9" cy="307.3" r="2.8"/><circle cx="434.7" cy="308.7" r="2.8"/><circle cx="434.7" cy="307.5" r="2.8"/><circle cx="434.7" cy="309.1" r="2.8"/><circle cx="434.7" cy="307.2" r="2.8"/><circle cx="434.7" cy="308.5" r="2.8"/><circle cx="434.7" cy="307.2" r="2.8"/><circle cx="434.7" cy="308.1" r="2.8"/><circle cx="434.7" cy="308.4" r="2.8"/><circle cx="452.2" cy="311.7" r="2.8"/><circle cx="452.2" cy="311.0" r="2.8"/><circle cx="452.2" cy="310.6" r="2.8"/><circle cx="452.2" cy="309.7" r="2.8"/><circle cx="452.2" cy="310.1" r="2.8"/><circle cx="452.2" cy="311.0" r="2.8"/><circle cx="452.2" cy="310.0" r="2.8"/><circle cx="452.2" cy="309.5" r="2.8"/><circle cx="461.0" cy="311.4" r="2.8"/><circle cx="461.0" cy="311.6" r="2.8"/><circle cx="461.0" cy="311.6" r="2.8"/><circle cx="461.0" cy="310.5" r="2.8"/><circle cx="461.0" cy="310.8" r="2.8"/><circle cx="461.0" cy="312.0" r="2.8"/><circle cx="461.0" cy="310.9" r="2.8"/><circle cx="461.0" cy="311.6" r="2.8"/><circle cx="469.8" cy="312.6" r="2.8"/><circle cx="469.8" cy="311.0" r="2.8"/><circle cx="469.8" cy="311.3" r="2.8"/><circle cx="469.8" cy="312.6" r="2.8"/><circle cx="469.8" cy="311.9" r="2.8"/><circle cx="469.8" cy="311.6" r="2.8"/><circle cx="469.8" cy="312.5" r="2.8"/><circle cx="469.8" cy="312.1" r="2.8"/><circle cx="487.4" cy="312.8" r="2.8"/><circle cx="487.4" cy="314.7" r="2.8"/><circle cx="487.4" cy="313.0" r="2.8"/><circle cx="487.4" cy="312.7" r="2.8"/><circle cx="487.4" cy="312.9" r="2.8"/><circle cx="487.4" cy="314.3" r="2.8"/><circle cx="487.4" cy="313.0" r="2.8"/><circle cx="487.4" cy="314.0" r="2.8"/><circle cx="496.2" cy="313.4" r="2.8"/><circle cx="496.2" cy="313.4" r="2.8"/><circle cx="496.2" cy="313.7" r="2.8"/><circle cx="496.2" cy="314.4" r="2.8"/><circle cx="496.2" cy="314.3" r="2.8"/><circle cx="496.2" cy="313.2" r="2.8"/><circle cx="496.2" cy="314.5" r="2.8"/><circle cx="496.2" cy="313.5" r="2.8"/><circle cx="504.9" cy="313.9" r="2.8"/><circle cx="504.9" cy="314.5" r="2.8"/><circle cx="504.9" cy="312.6" r="2.8"/><circle cx="504.9" cy="314.2" r="2.8"/><circle cx="504.9" cy="312.7" r="2.8"/><circle cx="504.9" cy="315.8" r="2.8"/><circle cx="504.9" cy="315.9" r="2.8"/><circle cx="504.9" cy="313.6" r="2.8"/><circle cx="522.5" cy="314.7" r="2.8"/><circle cx="522.5" cy="315.3" r="2.8"/><circle cx="522.5" cy="315.1" r="2.8"/><circle cx="522.5" cy="316.4" r="2.8"/><circle cx="522.5" cy="315.5" r="2.8"/><circle cx="522.5" cy="315.8" r="2.8"/><circle cx="522.5" cy="315.3" r="2.8"/><circle cx="522.5" cy="314.5" r="2.8"/><circle cx="531.3" cy="315.4" r="2.8"/><circle cx="531.3" cy="315.2" r="2.8"/><circle cx="531.3" cy="315.9" r="2.8"/><circle cx="531.3" cy="315.8" r="2.8"/><circle cx="531.3" cy="315.4" r="2.8"/><circle cx="531.3" cy="315.6" r="2.8"/><circle cx="338.1" cy="242.6" r="2.8"/><circle cx="338.1" cy="244.2" r="2.8"/><circle cx="346.9" cy="259.3" r="2.8"/><circle cx="355.6" cy="285.1" r="2.8"/><circle cx="425.9" cy="298.4" r="2.8"/><circle cx="425.9" cy="303.5" r="2.8"/><circle cx="496.2" cy="310.1" r="2.8"/></g><path d="M338.1 252.8L339.4 255.4L340.6 257.8L341.9 260.2L343.2 262.3L344.5 264.4L345.8 266.3L347.1 268.1L348.4 269.8L349.7 271.4L350.9 273.0L352.2 274.4L353.5 275.8L354.8 277.1L356.1 278.4L357.4 279.6L358.7 280.7L360.0 281.8L361.3 282.8L362.5 283.8L363.8 284.8L365.1 285.7L366.4 286.6L367.7 287.4L369.0 288.3L370.3 289.0L371.6 289.8L372.8 290.5L374.1 291.2L375.4 291.9L376.7 292.5L378.0 293.2L379.3 293.8L380.6 294.3L381.9 294.9L383.2 295.5L384.4 296.0L385.7 296.5L387.0 297.0L388.3 297.5L389.6 297.9L390.9 298.4L392.2 298.8L393.5 299.2L394.7 299.6L396.0 300.0L397.3 300.4L398.6 300.8L399.9 301.2L401.2 301.5L402.5 301.9L403.8 302.2L405.1 302.5L406.3 302.9L407.6 303.2L408.9 303.5L410.2 303.8L411.5 304.0L412.8 304.3L414.1 304.6L415.4 304.9L416.6 305.1L417.9 305.4L419.2 305.6L420.5 305.9L421.8 306.1L423.1 306.3L424.4 306.6L425.7 306.8L427.0 307.0L428.2 307.2L429.5 307.4L430.8 307.6L432.1 307.8L433.4 308.0L434.7 308.2L436.0 308.3L437.3 308.5L438.5 308.7L439.8 308.9L441.1 309.0L442.4 309.2L443.7 309.4L445.0 309.5L446.3 309.7L447.6 309.8L448.9 310.0L450.1 310.1L451.4 310.3L452.7 310.4L454.0 310.5L455.3 310.7L456.6 310.8L457.9 310.9L459.2 311.0L460.4 311.2L461.7 311.3L463.0 311.4L464.3 311.5L465.6 311.6L466.9 311.8L468.2 311.9L469.5 312.0L470.8 312.1L472.0 312.2L473.3 312.3L474.6 312.4L475.9 312.5L477.2 312.6L478.5 312.7L479.8 312.8L481.1 312.9L482.3 312.9L483.6 313.0L484.9 313.1L486.2 313.2L487.5 313.3L488.8 313.4L490.1 313.5L491.4 313.5L492.7 313.6L493.9 313.7L495.2 313.8L496.5 313.8L497.8 313.9L499.1 314.0L500.4 314.1L501.7 314.1L503.0 314.2L504.2 314.3L505.5 314.3L506.8 314.4L508.1 314.5L509.4 314.5L510.7 314.6L512.0 314.6L513.3 314.7L514.6 314.8L515.8 314.8L517.1 314.9L518.4 314.9L519.7 315.0L521.0 315.0L522.3 315.1L523.6 315.2L524.9 315.2L526.1 315.3L527.4 315.3L528.7 315.4L530.0 315.4L531.3 315.5" stroke="#a8a89c" stroke-width="1.6" fill="none"/></g><rect x="583.60" y="235.90" width="210.40" height="83.40" fill="none" stroke="#2b2b2b" stroke-width="1.25"/><path d="M583.60 319.30v-6M618.67 319.30v-3.5M653.73 319.30v-6M688.80 319.30v-3.5M723.87 319.30v-6M758.93 319.30v-3.5M794.00 319.30v-6M583.60 319.30h6M583.60 305.40h3.5M583.60 291.50h6M583.60 277.60h3.5M583.60 263.70h6M583.60 249.80h3.5M583.60 235.90h6" stroke="#2b2b2b" stroke-width="1.1" fill="none"/><g font-size="10.5" fill="#262626"><text x="583.60" y="335.20" text-anchor="middle">0,0</text><text x="653.73" y="335.20" text-anchor="middle">0,4</text><text x="723.87" y="335.20" text-anchor="middle">0,8</text><text x="794.00" y="335.20" text-anchor="middle">1,2</text><text x="579.60" y="326.10" text-anchor="end">0</text><text x="579.60" y="298.30" text-anchor="end">1</text><text x="579.60" y="270.50" text-anchor="end">2</text><text x="579.60" y="242.70" text-anchor="end">3</text></g><text x="675.70" y="248.80" text-anchor="middle" font-size="12.2" fill="#1a1a1a">Lanczos3</text><clipPath id="cLanczos3"><rect x="580.60" y="232.90" width="216.40" height="89.40"/></clipPath><g clip-path="url(#cLanczos3)"><g fill="#2d5fa8"><circle cx="583.6" cy="249.4" r="2.6"/><circle cx="592.4" cy="262.5" r="2.6"/><circle cx="601.1" cy="272.9" r="2.6"/><circle cx="609.9" cy="281.3" r="2.6"/><circle cx="618.7" cy="288.1" r="2.6"/><circle cx="627.4" cy="293.5" r="2.6"/><circle cx="636.2" cy="298.0" r="2.6"/><circle cx="645.0" cy="301.5" r="2.6"/><circle cx="653.7" cy="304.5" r="2.6"/><circle cx="662.5" cy="306.8" r="2.6"/><circle cx="671.3" cy="308.8" r="2.6"/><circle cx="680.0" cy="310.4" r="2.6"/><circle cx="688.8" cy="311.7" r="2.6"/><circle cx="697.6" cy="312.8" r="2.6"/><circle cx="706.3" cy="313.7" r="2.6"/><circle cx="715.1" cy="314.5" r="2.6"/><circle cx="723.9" cy="315.1" r="2.6"/><circle cx="732.6" cy="315.7" r="2.6"/><circle cx="741.4" cy="316.1" r="2.6"/><circle cx="750.2" cy="316.5" r="2.6"/><circle cx="758.9" cy="316.8" r="2.6"/><circle cx="767.7" cy="317.1" r="2.6"/><circle cx="776.5" cy="317.4" r="2.6"/><circle cx="785.2" cy="317.6" r="2.6"/></g><path d="M583.6 249.4L585.6 252.7L587.6 255.8L589.6 258.7L591.7 261.5L593.7 264.2L595.7 266.7L597.7 269.1L599.7 271.4L601.7 273.6L603.8 275.6L605.8 277.6L607.8 279.5L609.8 281.2L611.8 282.9L613.8 284.5L615.9 286.1L617.9 287.5L619.9 288.9L621.9 290.2L623.9 291.5L625.9 292.7L628.0 293.8L630.0 294.9L632.0 295.9L634.0 296.9L636.0 297.9L638.0 298.8L640.1 299.6L642.1 300.4L644.1 301.2L646.1 302.0L648.1 302.7L650.1 303.3L652.2 304.0L654.2 304.6L656.2 305.2L658.2 305.7L660.2 306.3L662.2 306.8L664.3 307.3L666.3 307.7L668.3 308.2L670.3 308.6L672.3 309.0L674.3 309.4L676.4 309.8L678.4 310.1L680.4 310.5L682.4 310.8L684.4 311.1L686.4 311.4L688.4 311.7L690.5 312.0L692.5 312.2L694.5 312.5L696.5 312.7L698.5 312.9L700.5 313.2L702.6 313.4L704.6 313.6L706.6 313.8L708.6 314.0L710.6 314.1L712.6 314.3L714.7 314.5L716.7 314.6L718.7 314.8L720.7 314.9L722.7 315.1L724.7 315.2L726.8 315.3L728.8 315.5L730.8 315.6L732.8 315.7L734.8 315.8L736.8 315.9L738.9 316.0L740.9 316.1L742.9 316.2L744.9 316.3L746.9 316.4L748.9 316.5L751.0 316.6L753.0 316.6L755.0 316.7L757.0 316.8L759.0 316.8L761.0 316.9L763.1 317.0L765.1 317.0L767.1 317.1L769.1 317.2L771.1 317.2L773.1 317.3L775.2 317.3L777.2 317.4L779.2 317.4L781.2 317.5L783.2 317.5L785.2 317.6" stroke="#eb9b5a" stroke-width="1.1" fill="none"/></g><rect x="320.50" y="360.80" width="210.80" height="83.50" fill="none" stroke="#2b2b2b" stroke-width="1.25"/><path d="M320.50 444.30v-6M341.58 444.30v-3.5M362.66 444.30v-6M383.74 444.30v-3.5M404.82 444.30v-6M425.90 444.30v-3.5M446.98 444.30v-6M468.06 444.30v-3.5M489.14 444.30v-6M510.22 444.30v-3.5M531.30 444.30v-6M320.50 444.30h6M320.50 433.86h3.5M320.50 423.43h6M320.50 412.99h3.5M320.50 402.55h6M320.50 392.11h3.5M320.50 381.68h6M320.50 371.24h3.5M320.50 360.80h6" stroke="#2b2b2b" stroke-width="1.1" fill="none"/><g font-size="10.5" fill="#262626"><text x="320.50" y="460.20" text-anchor="middle">0</text><text x="362.66" y="460.20" text-anchor="middle">50</text><text x="404.82" y="460.20" text-anchor="middle">100</text><text x="446.98" y="460.20" text-anchor="middle">150</text><text x="489.14" y="460.20" text-anchor="middle">200</text><text x="531.30" y="460.20" text-anchor="middle">250</text><text x="316.50" y="451.10" text-anchor="end">0</text><text x="316.50" y="430.23" text-anchor="end">40</text><text x="316.50" y="409.35" text-anchor="end">80</text><text x="316.50" y="388.48" text-anchor="end">120</text><text x="316.50" y="367.60" text-anchor="end">160</text></g><text x="412.40" y="373.70" text-anchor="middle" font-size="12.2" fill="#1a1a1a">Gauss1</text><text x="0" y="0" transform="translate(296.50 402.55) rotate(-90)" text-anchor="middle" font-size="12.5" fill="#262626">y</text><clipPath id="cGauss1"><rect x="317.50" y="357.80" width="216.80" height="89.50"/></clipPath><g clip-path="url(#cGauss1)"><g fill="#2270d6"><circle cx="321.3" cy="393.6" r="2.9"/><circle cx="322.2" cy="393.1" r="2.9"/><circle cx="323.0" cy="394.6" r="2.9"/><circle cx="323.9" cy="395.3" r="2.9"/><circle cx="324.7" cy="396.6" r="2.9"/><circle cx="325.6" cy="396.1" r="2.9"/><circle cx="326.4" cy="394.9" r="2.9"/><circle cx="327.2" cy="396.3" r="2.9"/><circle cx="328.1" cy="396.0" r="2.9"/><circle cx="328.9" cy="397.5" r="2.9"/><circle cx="329.8" cy="397.7" r="2.9"/><circle cx="330.6" cy="398.4" r="2.9"/><circle cx="331.5" cy="401.3" r="2.9"/><circle cx="332.3" cy="398.4" r="2.9"/><circle cx="333.1" cy="399.3" r="2.9"/><circle cx="334.0" cy="399.7" r="2.9"/><circle cx="334.8" cy="402.9" r="2.9"/><circle cx="335.7" cy="403.4" r="2.9"/><circle cx="336.5" cy="402.6" r="2.9"/><circle cx="337.4" cy="402.3" r="2.9"/><circle cx="338.2" cy="401.6" r="2.9"/><circle cx="339.1" cy="402.3" r="2.9"/><circle cx="339.9" cy="401.8" r="2.9"/><circle cx="340.7" cy="403.5" r="2.9"/><circle cx="341.6" cy="402.4" r="2.9"/><circle cx="342.4" cy="402.4" r="2.9"/><circle cx="343.3" cy="403.9" r="2.9"/><circle cx="344.1" cy="400.8" r="2.9"/><circle cx="345.0" cy="402.3" r="2.9"/><circle cx="345.8" cy="401.3" r="2.9"/><circle cx="346.6" cy="403.5" r="2.9"/><circle cx="347.5" cy="403.4" r="2.9"/><circle cx="348.3" cy="402.6" r="2.9"/><circle cx="349.2" cy="401.9" r="2.9"/><circle cx="350.0" cy="400.5" r="2.9"/><circle cx="350.9" cy="400.4" r="2.9"/><circle cx="351.7" cy="400.7" r="2.9"/><circle cx="352.5" cy="400.6" r="2.9"/><circle cx="353.4" cy="399.2" r="2.9"/><circle cx="354.2" cy="396.1" r="2.9"/><circle cx="355.1" cy="397.7" r="2.9"/><circle cx="355.9" cy="395.2" r="2.9"/><circle cx="356.8" cy="393.8" r="2.9"/><circle cx="357.6" cy="395.1" r="2.9"/><circle cx="358.4" cy="391.7" r="2.9"/><circle cx="359.3" cy="388.7" r="2.9"/><circle cx="360.1" cy="391.5" r="2.9"/><circle cx="361.0" cy="387.8" r="2.9"/><circle cx="361.8" cy="385.9" r="2.9"/><circle cx="362.7" cy="385.2" r="2.9"/><circle cx="363.5" cy="381.9" r="2.9"/><circle cx="364.3" cy="381.0" r="2.9"/><circle cx="365.2" cy="381.2" r="2.9"/><circle cx="366.0" cy="376.6" r="2.9"/><circle cx="366.9" cy="375.3" r="2.9"/><circle cx="367.7" cy="373.4" r="2.9"/><circle cx="368.6" cy="371.4" r="2.9"/><circle cx="369.4" cy="371.5" r="2.9"/><circle cx="370.2" cy="370.5" r="2.9"/><circle cx="371.1" cy="371.3" r="2.9"/><circle cx="371.9" cy="367.8" r="2.9"/><circle cx="372.8" cy="368.6" r="2.9"/><circle cx="373.6" cy="367.8" r="2.9"/><circle cx="374.5" cy="368.4" r="2.9"/><circle cx="375.3" cy="367.7" r="2.9"/><circle cx="376.2" cy="367.0" r="2.9"/><circle cx="377.0" cy="364.7" r="2.9"/><circle cx="377.8" cy="369.3" r="2.9"/><circle cx="378.7" cy="369.0" r="2.9"/><circle cx="379.5" cy="367.4" r="2.9"/><circle cx="380.4" cy="366.7" r="2.9"/><circle cx="381.2" cy="368.9" r="2.9"/><circle cx="382.1" cy="373.3" r="2.9"/><circle cx="382.9" cy="375.4" r="2.9"/><circle cx="383.7" cy="373.2" r="2.9"/><circle cx="384.6" cy="376.3" r="2.9"/><circle cx="385.4" cy="378.5" r="2.9"/><circle cx="386.3" cy="377.6" r="2.9"/><circle cx="387.1" cy="379.4" r="2.9"/><circle cx="388.0" cy="382.7" r="2.9"/><circle cx="388.8" cy="384.7" r="2.9"/><circle cx="389.6" cy="386.6" r="2.9"/><circle cx="390.5" cy="387.2" r="2.9"/><circle cx="391.3" cy="390.7" r="2.9"/><circle cx="392.2" cy="393.0" r="2.9"/><circle cx="393.0" cy="395.1" r="2.9"/><circle cx="393.9" cy="399.9" r="2.9"/><circle cx="394.7" cy="398.3" r="2.9"/><circle cx="395.5" cy="400.7" r="2.9"/><circle cx="396.4" cy="403.2" r="2.9"/><circle cx="397.2" cy="408.4" r="2.9"/><circle cx="398.1" cy="408.5" r="2.9"/><circle cx="398.9" cy="408.3" r="2.9"/><circle cx="399.8" cy="413.4" r="2.9"/><circle cx="400.6" cy="412.8" r="2.9"/><circle cx="401.4" cy="412.7" r="2.9"/><circle cx="402.3" cy="417.1" r="2.9"/><circle cx="403.1" cy="414.6" r="2.9"/><circle cx="404.0" cy="417.2" r="2.9"/><circle cx="404.8" cy="419.2" r="2.9"/><circle cx="405.7" cy="419.6" r="2.9"/><circle cx="406.5" cy="420.1" r="2.9"/><circle cx="407.3" cy="421.7" r="2.9"/><circle cx="408.2" cy="421.2" r="2.9"/><circle cx="409.0" cy="424.3" r="2.9"/><circle cx="409.9" cy="424.6" r="2.9"/><circle cx="410.7" cy="423.3" r="2.9"/><circle cx="411.6" cy="425.2" r="2.9"/><circle cx="412.4" cy="426.9" r="2.9"/><circle cx="413.3" cy="425.0" r="2.9"/><circle cx="414.1" cy="424.8" r="2.9"/><circle cx="414.9" cy="427.7" r="2.9"/><circle cx="415.8" cy="429.3" r="2.9"/><circle cx="416.6" cy="428.0" r="2.9"/><circle cx="417.5" cy="428.3" r="2.9"/><circle cx="418.3" cy="428.8" r="2.9"/><circle cx="419.2" cy="426.8" r="2.9"/><circle cx="420.0" cy="430.3" r="2.9"/><circle cx="420.8" cy="427.5" r="2.9"/><circle cx="421.7" cy="431.0" r="2.9"/><circle cx="422.5" cy="430.6" r="2.9"/><circle cx="423.4" cy="428.9" r="2.9"/><circle cx="424.2" cy="428.5" r="2.9"/><circle cx="425.1" cy="429.0" r="2.9"/><circle cx="425.9" cy="429.9" r="2.9"/><circle cx="426.7" cy="430.3" r="2.9"/><circle cx="427.6" cy="430.4" r="2.9"/><circle cx="428.4" cy="430.0" r="2.9"/><circle cx="429.3" cy="431.2" r="2.9"/><circle cx="430.1" cy="430.7" r="2.9"/><circle cx="431.0" cy="430.5" r="2.9"/><circle cx="431.8" cy="431.3" r="2.9"/><circle cx="432.6" cy="430.5" r="2.9"/><circle cx="433.5" cy="430.8" r="2.9"/><circle cx="434.3" cy="429.0" r="2.9"/><circle cx="435.2" cy="431.3" r="2.9"/><circle cx="436.0" cy="432.4" r="2.9"/><circle cx="436.9" cy="432.4" r="2.9"/><circle cx="437.7" cy="432.0" r="2.9"/><circle cx="438.5" cy="430.8" r="2.9"/><circle cx="439.4" cy="432.5" r="2.9"/><circle cx="440.2" cy="431.5" r="2.9"/><circle cx="441.1" cy="429.6" r="2.9"/><circle cx="441.9" cy="435.3" r="2.9"/><circle cx="442.8" cy="433.3" r="2.9"/><circle cx="443.6" cy="431.3" r="2.9"/><circle cx="444.5" cy="430.9" r="2.9"/><circle cx="445.3" cy="430.9" r="2.9"/><circle cx="446.1" cy="431.4" r="2.9"/><circle cx="447.0" cy="429.6" r="2.9"/><circle cx="447.8" cy="429.7" r="2.9"/><circle cx="448.7" cy="430.2" r="2.9"/><circle cx="449.5" cy="425.7" r="2.9"/><circle cx="450.4" cy="427.7" r="2.9"/><circle cx="451.2" cy="428.1" r="2.9"/><circle cx="452.0" cy="426.5" r="2.9"/><circle cx="452.9" cy="425.7" r="2.9"/><circle cx="453.7" cy="424.4" r="2.9"/><circle cx="454.6" cy="426.6" r="2.9"/><circle cx="455.4" cy="422.4" r="2.9"/><circle cx="456.3" cy="419.1" r="2.9"/><circle cx="457.1" cy="420.4" r="2.9"/><circle cx="457.9" cy="417.4" r="2.9"/><circle cx="458.8" cy="414.5" r="2.9"/><circle cx="459.6" cy="413.0" r="2.9"/><circle cx="460.5" cy="410.5" r="2.9"/><circle cx="461.3" cy="413.0" r="2.9"/><circle cx="462.2" cy="409.6" r="2.9"/><circle cx="463.0" cy="408.0" r="2.9"/><circle cx="463.8" cy="405.3" r="2.9"/><circle cx="464.7" cy="403.2" r="2.9"/><circle cx="465.5" cy="406.8" r="2.9"/><circle cx="466.4" cy="400.7" r="2.9"/><circle cx="467.2" cy="403.0" r="2.9"/><circle cx="468.1" cy="399.4" r="2.9"/><circle cx="468.9" cy="401.5" r="2.9"/><circle cx="469.7" cy="398.9" r="2.9"/><circle cx="470.6" cy="397.3" r="2.9"/><circle cx="471.4" cy="399.0" r="2.9"/><circle cx="472.3" cy="398.8" r="2.9"/><circle cx="473.1" cy="398.4" r="2.9"/><circle cx="474.0" cy="399.9" r="2.9"/><circle cx="474.8" cy="401.0" r="2.9"/><circle cx="475.6" cy="399.9" r="2.9"/><circle cx="476.5" cy="401.8" r="2.9"/><circle cx="477.3" cy="404.9" r="2.9"/><circle cx="478.2" cy="402.4" r="2.9"/><circle cx="479.0" cy="409.1" r="2.9"/><circle cx="479.9" cy="408.1" r="2.9"/><circle cx="480.7" cy="411.4" r="2.9"/><circle cx="481.6" cy="412.6" r="2.9"/><circle cx="482.4" cy="413.7" r="2.9"/><circle cx="483.2" cy="416.2" r="2.9"/><circle cx="484.1" cy="417.4" r="2.9"/><circle cx="484.9" cy="422.0" r="2.9"/><circle cx="485.8" cy="423.7" r="2.9"/><circle cx="486.6" cy="422.6" r="2.9"/><circle cx="487.5" cy="426.2" r="2.9"/><circle cx="488.3" cy="427.7" r="2.9"/><circle cx="489.1" cy="429.7" r="2.9"/><circle cx="490.0" cy="427.4" r="2.9"/><circle cx="490.8" cy="429.3" r="2.9"/><circle cx="491.7" cy="429.4" r="2.9"/><circle cx="492.5" cy="433.6" r="2.9"/><circle cx="493.4" cy="433.2" r="2.9"/><circle cx="494.2" cy="435.5" r="2.9"/><circle cx="495.0" cy="433.7" r="2.9"/><circle cx="495.9" cy="433.3" r="2.9"/><circle cx="496.7" cy="437.1" r="2.9"/><circle cx="497.6" cy="434.4" r="2.9"/><circle cx="498.4" cy="435.6" r="2.9"/><circle cx="499.3" cy="437.5" r="2.9"/><circle cx="500.1" cy="440.1" r="2.9"/><circle cx="500.9" cy="436.0" r="2.9"/><circle cx="501.8" cy="438.2" r="2.9"/><circle cx="502.6" cy="439.1" r="2.9"/><circle cx="503.5" cy="438.0" r="2.9"/><circle cx="504.3" cy="438.1" r="2.9"/><circle cx="505.2" cy="436.8" r="2.9"/><circle cx="506.0" cy="440.3" r="2.9"/><circle cx="506.8" cy="437.5" r="2.9"/><circle cx="507.7" cy="437.2" r="2.9"/><circle cx="508.5" cy="437.3" r="2.9"/><circle cx="509.4" cy="439.5" r="2.9"/><circle cx="510.2" cy="440.3" r="2.9"/><circle cx="511.1" cy="438.1" r="2.9"/><circle cx="511.9" cy="439.4" r="2.9"/><circle cx="512.7" cy="439.4" r="2.9"/><circle cx="513.6" cy="437.8" r="2.9"/><circle cx="514.4" cy="440.0" r="2.9"/><circle cx="515.3" cy="442.7" r="2.9"/><circle cx="516.1" cy="440.3" r="2.9"/><circle cx="517.0" cy="442.2" r="2.9"/><circle cx="517.8" cy="438.8" r="2.9"/><circle cx="518.7" cy="439.5" r="2.9"/><circle cx="519.5" cy="440.8" r="2.9"/><circle cx="520.3" cy="440.0" r="2.9"/><circle cx="521.2" cy="439.0" r="2.9"/><circle cx="522.0" cy="440.0" r="2.9"/><circle cx="522.9" cy="438.4" r="2.9"/><circle cx="523.7" cy="440.3" r="2.9"/><circle cx="524.6" cy="438.9" r="2.9"/><circle cx="525.4" cy="438.3" r="2.9"/><circle cx="526.2" cy="438.2" r="2.9"/><circle cx="527.1" cy="441.2" r="2.9"/><circle cx="527.9" cy="439.3" r="2.9"/><circle cx="528.8" cy="442.9" r="2.9"/><circle cx="529.6" cy="441.9" r="2.9"/><circle cx="530.5" cy="443.1" r="2.9"/><circle cx="531.3" cy="439.2" r="2.9"/></g><path d="M321.3 393.3L322.2 393.8L323.0 394.3L323.9 394.8L324.7 395.3L325.5 395.8L326.4 396.3L327.2 396.8L328.1 397.3L328.9 397.8L329.7 398.2L330.6 398.7L331.4 399.1L332.3 399.5L333.1 399.9L333.9 400.3L334.8 400.7L335.6 401.1L336.5 401.4L337.3 401.7L338.1 402.0L339.0 402.3L339.8 402.5L340.7 402.7L341.5 402.8L342.3 403.0L343.2 403.0L344.0 403.0L344.9 403.0L345.7 402.9L346.5 402.7L347.4 402.5L348.2 402.2L349.1 401.8L349.9 401.4L350.7 400.8L351.6 400.2L352.4 399.5L353.3 398.7L354.1 397.8L354.9 396.8L355.8 395.7L356.6 394.6L357.5 393.3L358.3 392.0L359.1 390.6L360.0 389.2L360.8 387.6L361.7 386.1L362.5 384.5L363.3 382.9L364.2 381.3L365.0 379.6L365.9 378.1L366.7 376.5L367.5 375.0L368.4 373.6L369.2 372.2L370.1 371.0L370.9 369.9L371.7 368.9L372.6 368.0L373.4 367.3L374.3 366.8L375.1 366.5L375.9 366.3L376.8 366.3L377.6 366.5L378.5 367.0L379.3 367.6L380.1 368.3L381.0 369.3L381.8 370.4L382.7 371.7L383.5 373.2L384.3 374.8L385.2 376.5L386.0 378.3L386.8 380.3L387.7 382.3L388.5 384.3L389.4 386.4L390.2 388.6L391.0 390.7L391.9 392.9L392.7 395.0L393.6 397.2L394.4 399.2L395.2 401.3L396.1 403.2L396.9 405.1L397.8 407.0L398.6 408.7L399.4 410.4L400.3 412.0L401.1 413.5L402.0 414.9L402.8 416.2L403.6 417.4L404.5 418.6L405.3 419.6L406.2 420.6L407.0 421.5L407.8 422.3L408.7 423.1L409.5 423.8L410.4 424.4L411.2 425.0L412.0 425.6L412.9 426.1L413.7 426.5L414.6 426.9L415.4 427.3L416.2 427.7L417.1 428.0L417.9 428.3L418.8 428.5L419.6 428.8L420.4 429.0L421.3 429.3L422.1 429.5L423.0 429.7L423.8 429.9L424.6 430.0L425.5 430.2L426.3 430.4L427.2 430.5L428.0 430.7L428.8 430.8L429.7 431.0L430.5 431.1L431.4 431.3L432.2 431.4L433.0 431.5L433.9 431.6L434.7 431.7L435.6 431.8L436.4 431.9L437.2 432.0L438.1 432.0L438.9 432.0L439.8 432.0L440.6 432.0L441.4 432.0L442.3 431.9L443.1 431.8L444.0 431.6L444.8 431.4L445.6 431.1L446.5 430.7L447.3 430.3L448.2 429.8L449.0 429.3L449.8 428.6L450.7 427.8L451.5 427.0L452.4 426.0L453.2 425.0L454.0 423.8L454.9 422.6L455.7 421.3L456.6 419.9L457.4 418.4L458.2 416.8L459.1 415.2L459.9 413.6L460.8 411.9L461.6 410.3L462.4 408.7L463.3 407.1L464.1 405.6L465.0 404.2L465.8 402.9L466.6 401.8L467.5 400.8L468.3 400.0L469.2 399.4L470.0 399.0L470.8 398.9L471.7 398.9L472.5 399.1L473.4 399.6L474.2 400.3L475.0 401.2L475.9 402.2L476.7 403.5L477.6 404.9L478.4 406.4L479.2 408.0L480.1 409.7L480.9 411.4L481.8 413.2L482.6 415.1L483.4 416.9L484.3 418.7L485.1 420.4L485.9 422.1L486.8 423.7L487.6 425.2L488.5 426.7L489.3 428.1L490.1 429.3L491.0 430.5L491.8 431.5L492.7 432.5L493.5 433.4L494.3 434.2L495.2 434.8L496.0 435.5L496.9 436.0L497.7 436.5L498.5 436.9L499.4 437.3L500.2 437.6L501.1 437.9L501.9 438.1L502.7 438.3L503.6 438.5L504.4 438.7L505.3 438.8L506.1 438.9L506.9 439.0L507.8 439.1L508.6 439.2L509.5 439.3L510.3 439.4L511.1 439.4L512.0 439.5L512.8 439.6L513.7 439.6L514.5 439.7L515.3 439.7L516.2 439.8L517.0 439.8L517.9 439.9L518.7 439.9L519.5 440.0L520.4 440.0L521.2 440.1L522.1 440.1L522.9 440.2L523.7 440.2L524.6 440.2L525.4 440.3L526.3 440.3L527.1 440.4L527.9 440.4L528.8 440.4L529.6 440.5L530.5 440.5L531.3 440.6" stroke="#7d8489" stroke-width="1.8" fill="none"/></g><rect x="583.60" y="360.80" width="210.40" height="83.50" fill="none" stroke="#2b2b2b" stroke-width="1.25"/><path d="M583.60 444.30v-6M604.64 444.30v-3.5M625.68 444.30v-6M646.72 444.30v-3.5M667.76 444.30v-6M688.80 444.30v-3.5M709.84 444.30v-6M730.88 444.30v-3.5M751.92 444.30v-6M772.96 444.30v-3.5M794.00 444.30v-6M583.60 444.30h6M583.60 438.34h3.5M583.60 432.37h6M583.60 426.41h3.5M583.60 420.44h6M583.60 414.48h3.5M583.60 408.51h6M583.60 402.55h3.5M583.60 396.59h6M583.60 390.62h3.5M583.60 384.66h6M583.60 378.69h3.5M583.60 372.73h6M583.60 366.76h3.5M583.60 360.80h6" stroke="#2b2b2b" stroke-width="1.1" fill="none"/><g font-size="10.5" fill="#262626"><text x="583.60" y="460.20" text-anchor="middle">0</text><text x="625.68" y="460.20" text-anchor="middle">50</text><text x="667.76" y="460.20" text-anchor="middle">100</text><text x="709.84" y="460.20" text-anchor="middle">150</text><text x="751.92" y="460.20" text-anchor="middle">200</text><text x="794.00" y="460.20" text-anchor="middle">250</text><text x="579.60" y="451.10" text-anchor="end">0</text><text x="579.60" y="439.17" text-anchor="end">20</text><text x="579.60" y="427.24" text-anchor="end">40</text><text x="579.60" y="415.31" text-anchor="end">60</text><text x="579.60" y="403.39" text-anchor="end">80</text><text x="579.60" y="391.46" text-anchor="end">100</text><text x="579.60" y="379.53" text-anchor="end">120</text><text x="579.60" y="367.60" text-anchor="end">140</text></g><text x="711.40" y="373.70" text-anchor="middle" font-size="12.2" fill="#1a1a1a">Gauss2</text><clipPath id="cGauss2"><rect x="580.60" y="357.80" width="216.40" height="89.50"/></clipPath><g clip-path="url(#cGauss2)"><g fill="#2270d6"><circle cx="584.4" cy="387.7" r="2.9"/><circle cx="585.3" cy="386.0" r="2.9"/><circle cx="586.1" cy="385.7" r="2.9"/><circle cx="587.0" cy="388.5" r="2.9"/><circle cx="587.8" cy="390.4" r="2.9"/><circle cx="588.6" cy="389.1" r="2.9"/><circle cx="589.5" cy="388.9" r="2.9"/><circle cx="590.3" cy="388.6" r="2.9"/><circle cx="591.2" cy="392.6" r="2.9"/><circle cx="592.0" cy="393.3" r="2.9"/><circle cx="592.9" cy="390.9" r="2.9"/><circle cx="593.7" cy="391.8" r="2.9"/><circle cx="594.5" cy="390.8" r="2.9"/><circle cx="595.4" cy="392.2" r="2.9"/><circle cx="596.2" cy="394.4" r="2.9"/><circle cx="597.1" cy="395.2" r="2.9"/><circle cx="597.9" cy="391.5" r="2.9"/><circle cx="598.7" cy="396.3" r="2.9"/><circle cx="599.6" cy="397.5" r="2.9"/><circle cx="600.4" cy="398.6" r="2.9"/><circle cx="601.3" cy="397.3" r="2.9"/><circle cx="602.1" cy="397.7" r="2.9"/><circle cx="603.0" cy="399.0" r="2.9"/><circle cx="603.8" cy="399.0" r="2.9"/><circle cx="604.6" cy="399.0" r="2.9"/><circle cx="605.5" cy="398.9" r="2.9"/><circle cx="606.3" cy="398.8" r="2.9"/><circle cx="607.2" cy="400.6" r="2.9"/><circle cx="608.0" cy="404.0" r="2.9"/><circle cx="608.8" cy="400.8" r="2.9"/><circle cx="609.7" cy="404.4" r="2.9"/><circle cx="610.5" cy="403.0" r="2.9"/><circle cx="611.4" cy="405.4" r="2.9"/><circle cx="612.2" cy="403.7" r="2.9"/><circle cx="613.1" cy="405.3" r="2.9"/><circle cx="613.9" cy="404.2" r="2.9"/><circle cx="614.7" cy="400.1" r="2.9"/><circle cx="615.6" cy="405.5" r="2.9"/><circle cx="616.4" cy="404.6" r="2.9"/><circle cx="617.3" cy="408.2" r="2.9"/><circle cx="618.1" cy="407.1" r="2.9"/><circle cx="618.9" cy="406.1" r="2.9"/><circle cx="619.8" cy="407.6" r="2.9"/><circle cx="620.6" cy="407.3" r="2.9"/><circle cx="621.5" cy="408.1" r="2.9"/><circle cx="622.3" cy="410.1" r="2.9"/><circle cx="623.2" cy="408.1" r="2.9"/><circle cx="624.0" cy="410.6" r="2.9"/><circle cx="624.8" cy="406.9" r="2.9"/><circle cx="625.7" cy="410.8" r="2.9"/><circle cx="626.5" cy="409.4" r="2.9"/><circle cx="627.4" cy="410.7" r="2.9"/><circle cx="628.2" cy="409.6" r="2.9"/><circle cx="629.0" cy="412.2" r="2.9"/><circle cx="629.9" cy="410.1" r="2.9"/><circle cx="630.7" cy="412.0" r="2.9"/><circle cx="631.6" cy="410.2" r="2.9"/><circle cx="632.4" cy="411.4" r="2.9"/><circle cx="633.3" cy="412.3" r="2.9"/><circle cx="634.1" cy="413.8" r="2.9"/><circle cx="634.9" cy="411.6" r="2.9"/><circle cx="635.8" cy="412.1" r="2.9"/><circle cx="636.6" cy="410.5" r="2.9"/><circle cx="637.5" cy="413.5" r="2.9"/><circle cx="638.3" cy="412.0" r="2.9"/><circle cx="639.1" cy="412.0" r="2.9"/><circle cx="640.0" cy="412.2" r="2.9"/><circle cx="640.8" cy="412.1" r="2.9"/><circle cx="641.7" cy="411.9" r="2.9"/><circle cx="642.5" cy="412.7" r="2.9"/><circle cx="643.4" cy="412.9" r="2.9"/><circle cx="644.2" cy="411.4" r="2.9"/><circle cx="645.0" cy="409.4" r="2.9"/><circle cx="645.9" cy="407.3" r="2.9"/><circle cx="646.7" cy="407.4" r="2.9"/><circle cx="647.6" cy="406.4" r="2.9"/><circle cx="648.4" cy="405.8" r="2.9"/><circle cx="649.2" cy="404.9" r="2.9"/><circle cx="650.1" cy="404.5" r="2.9"/><circle cx="650.9" cy="402.3" r="2.9"/><circle cx="651.8" cy="399.5" r="2.9"/><circle cx="652.6" cy="401.1" r="2.9"/><circle cx="653.5" cy="400.1" r="2.9"/><circle cx="654.3" cy="394.5" r="2.9"/><circle cx="655.1" cy="395.4" r="2.9"/><circle cx="656.0" cy="392.5" r="2.9"/><circle cx="656.8" cy="390.8" r="2.9"/><circle cx="657.7" cy="391.9" r="2.9"/><circle cx="658.5" cy="384.6" r="2.9"/><circle cx="659.3" cy="383.6" r="2.9"/><circle cx="660.2" cy="384.0" r="2.9"/><circle cx="661.0" cy="381.2" r="2.9"/><circle cx="661.9" cy="380.2" r="2.9"/><circle cx="662.7" cy="379.8" r="2.9"/><circle cx="663.6" cy="376.8" r="2.9"/><circle cx="664.4" cy="374.4" r="2.9"/><circle cx="665.2" cy="371.6" r="2.9"/><circle cx="666.1" cy="370.6" r="2.9"/><circle cx="666.9" cy="370.2" r="2.9"/><circle cx="667.8" cy="367.0" r="2.9"/><circle cx="668.6" cy="369.0" r="2.9"/><circle cx="669.4" cy="365.8" r="2.9"/><circle cx="670.3" cy="364.5" r="2.9"/><circle cx="671.1" cy="366.1" r="2.9"/><circle cx="672.0" cy="367.9" r="2.9"/><circle cx="672.8" cy="366.5" r="2.9"/><circle cx="673.7" cy="364.8" r="2.9"/><circle cx="674.5" cy="364.6" r="2.9"/><circle cx="675.3" cy="363.6" r="2.9"/><circle cx="676.2" cy="368.1" r="2.9"/><circle cx="677.0" cy="367.4" r="2.9"/><circle cx="677.9" cy="367.5" r="2.9"/><circle cx="678.7" cy="369.9" r="2.9"/><circle cx="679.5" cy="374.5" r="2.9"/><circle cx="680.4" cy="371.3" r="2.9"/><circle cx="681.2" cy="370.7" r="2.9"/><circle cx="682.1" cy="374.3" r="2.9"/><circle cx="682.9" cy="378.9" r="2.9"/><circle cx="683.8" cy="380.0" r="2.9"/><circle cx="684.6" cy="380.9" r="2.9"/><circle cx="685.4" cy="379.4" r="2.9"/><circle cx="686.3" cy="384.0" r="2.9"/><circle cx="687.1" cy="386.6" r="2.9"/><circle cx="688.0" cy="386.1" r="2.9"/><circle cx="688.8" cy="390.2" r="2.9"/><circle cx="689.6" cy="388.8" r="2.9"/><circle cx="690.5" cy="394.0" r="2.9"/><circle cx="691.3" cy="394.9" r="2.9"/><circle cx="692.2" cy="394.3" r="2.9"/><circle cx="693.0" cy="394.1" r="2.9"/><circle cx="693.8" cy="396.0" r="2.9"/><circle cx="694.7" cy="397.1" r="2.9"/><circle cx="695.5" cy="400.6" r="2.9"/><circle cx="696.4" cy="399.2" r="2.9"/><circle cx="697.2" cy="399.0" r="2.9"/><circle cx="698.1" cy="398.8" r="2.9"/><circle cx="698.9" cy="396.8" r="2.9"/><circle cx="699.7" cy="397.7" r="2.9"/><circle cx="700.6" cy="395.5" r="2.9"/><circle cx="701.4" cy="395.8" r="2.9"/><circle cx="702.3" cy="395.7" r="2.9"/><circle cx="703.1" cy="394.2" r="2.9"/><circle cx="703.9" cy="392.9" r="2.9"/><circle cx="704.8" cy="391.4" r="2.9"/><circle cx="705.6" cy="392.6" r="2.9"/><circle cx="706.5" cy="391.4" r="2.9"/><circle cx="707.3" cy="392.4" r="2.9"/><circle cx="708.2" cy="387.4" r="2.9"/><circle cx="709.0" cy="387.1" r="2.9"/><circle cx="709.8" cy="389.2" r="2.9"/><circle cx="710.7" cy="389.5" r="2.9"/><circle cx="711.5" cy="390.7" r="2.9"/><circle cx="712.4" cy="388.7" r="2.9"/><circle cx="713.2" cy="389.1" r="2.9"/><circle cx="714.0" cy="386.7" r="2.9"/><circle cx="714.9" cy="390.4" r="2.9"/><circle cx="715.7" cy="392.8" r="2.9"/><circle cx="716.6" cy="396.5" r="2.9"/><circle cx="717.4" cy="392.0" r="2.9"/><circle cx="718.3" cy="395.3" r="2.9"/><circle cx="719.1" cy="399.6" r="2.9"/><circle cx="719.9" cy="398.6" r="2.9"/><circle cx="720.8" cy="403.1" r="2.9"/><circle cx="721.6" cy="397.4" r="2.9"/><circle cx="722.5" cy="402.9" r="2.9"/><circle cx="723.3" cy="405.7" r="2.9"/><circle cx="724.1" cy="408.8" r="2.9"/><circle cx="725.0" cy="413.8" r="2.9"/><circle cx="725.8" cy="412.8" r="2.9"/><circle cx="726.7" cy="416.8" r="2.9"/><circle cx="727.5" cy="415.5" r="2.9"/><circle cx="728.4" cy="421.4" r="2.9"/><circle cx="729.2" cy="421.3" r="2.9"/><circle cx="730.0" cy="419.8" r="2.9"/><circle cx="730.9" cy="420.8" r="2.9"/><circle cx="731.7" cy="426.4" r="2.9"/><circle cx="732.6" cy="428.3" r="2.9"/><circle cx="733.4" cy="426.0" r="2.9"/><circle cx="734.2" cy="427.2" r="2.9"/><circle cx="735.1" cy="431.0" r="2.9"/><circle cx="735.9" cy="431.5" r="2.9"/><circle cx="736.8" cy="432.4" r="2.9"/><circle cx="737.6" cy="433.9" r="2.9"/><circle cx="738.5" cy="433.9" r="2.9"/><circle cx="739.3" cy="431.6" r="2.9"/><circle cx="740.1" cy="433.0" r="2.9"/><circle cx="741.0" cy="431.5" r="2.9"/><circle cx="741.8" cy="435.1" r="2.9"/><circle cx="742.7" cy="435.6" r="2.9"/><circle cx="743.5" cy="437.2" r="2.9"/><circle cx="744.3" cy="436.2" r="2.9"/><circle cx="745.2" cy="438.3" r="2.9"/><circle cx="746.0" cy="439.2" r="2.9"/><circle cx="746.9" cy="435.7" r="2.9"/><circle cx="747.7" cy="434.8" r="2.9"/><circle cx="748.6" cy="435.8" r="2.9"/><circle cx="749.4" cy="435.3" r="2.9"/><circle cx="750.2" cy="437.0" r="2.9"/><circle cx="751.1" cy="438.6" r="2.9"/><circle cx="751.9" cy="437.5" r="2.9"/><circle cx="752.8" cy="438.3" r="2.9"/><circle cx="753.6" cy="439.5" r="2.9"/><circle cx="754.4" cy="440.4" r="2.9"/><circle cx="755.3" cy="440.2" r="2.9"/><circle cx="756.1" cy="438.1" r="2.9"/><circle cx="757.0" cy="437.9" r="2.9"/><circle cx="757.8" cy="438.9" r="2.9"/><circle cx="758.7" cy="436.2" r="2.9"/><circle cx="759.5" cy="438.1" r="2.9"/><circle cx="760.3" cy="437.6" r="2.9"/><circle cx="761.2" cy="436.7" r="2.9"/><circle cx="762.0" cy="439.8" r="2.9"/><circle cx="762.9" cy="441.6" r="2.9"/><circle cx="763.7" cy="437.6" r="2.9"/><circle cx="764.5" cy="439.8" r="2.9"/><circle cx="765.4" cy="436.9" r="2.9"/><circle cx="766.2" cy="438.4" r="2.9"/><circle cx="767.1" cy="437.4" r="2.9"/><circle cx="767.9" cy="437.8" r="2.9"/><circle cx="768.8" cy="442.1" r="2.9"/><circle cx="769.6" cy="438.0" r="2.9"/><circle cx="770.4" cy="440.2" r="2.9"/><circle cx="771.3" cy="440.3" r="2.9"/><circle cx="772.1" cy="439.9" r="2.9"/><circle cx="773.0" cy="438.2" r="2.9"/><circle cx="773.8" cy="438.1" r="2.9"/><circle cx="774.6" cy="437.9" r="2.9"/><circle cx="775.5" cy="442.0" r="2.9"/><circle cx="776.3" cy="440.4" r="2.9"/><circle cx="777.2" cy="443.1" r="2.9"/><circle cx="778.0" cy="439.8" r="2.9"/><circle cx="778.9" cy="438.8" r="2.9"/><circle cx="779.7" cy="440.9" r="2.9"/><circle cx="780.5" cy="439.4" r="2.9"/><circle cx="781.4" cy="439.5" r="2.9"/><circle cx="782.2" cy="438.4" r="2.9"/><circle cx="783.1" cy="441.2" r="2.9"/><circle cx="783.9" cy="441.2" r="2.9"/><circle cx="784.7" cy="441.2" r="2.9"/><circle cx="785.6" cy="437.5" r="2.9"/><circle cx="786.4" cy="438.5" r="2.9"/><circle cx="787.3" cy="440.4" r="2.9"/><circle cx="788.1" cy="439.9" r="2.9"/><circle cx="789.0" cy="440.1" r="2.9"/><circle cx="789.8" cy="440.0" r="2.9"/><circle cx="790.6" cy="440.7" r="2.9"/><circle cx="791.5" cy="440.9" r="2.9"/><circle cx="792.3" cy="442.3" r="2.9"/><circle cx="793.2" cy="441.4" r="2.9"/><circle cx="794.0" cy="438.1" r="2.9"/></g><path d="M584.4 385.9L585.3 386.5L586.1 387.2L587.0 387.8L587.8 388.4L588.6 389.0L589.5 389.6L590.3 390.2L591.1 390.8L592.0 391.4L592.8 391.9L593.7 392.5L594.5 393.1L595.3 393.6L596.2 394.2L597.0 394.7L597.9 395.3L598.7 395.8L599.5 396.3L600.4 396.9L601.2 397.4L602.0 397.9L602.9 398.4L603.7 398.9L604.6 399.4L605.4 399.9L606.2 400.4L607.1 400.8L607.9 401.3L608.8 401.8L609.6 402.2L610.4 402.7L611.3 403.2L612.1 403.6L612.9 404.0L613.8 404.5L614.6 404.9L615.5 405.3L616.3 405.8L617.1 406.2L618.0 406.6L618.8 407.0L619.6 407.4L620.5 407.8L621.3 408.2L622.2 408.5L623.0 408.9L623.8 409.3L624.7 409.6L625.5 410.0L626.4 410.3L627.2 410.6L628.0 410.9L628.9 411.2L629.7 411.5L630.5 411.8L631.4 412.0L632.2 412.2L633.1 412.4L633.9 412.6L634.7 412.7L635.6 412.8L636.4 412.9L637.3 412.9L638.1 412.9L638.9 412.8L639.8 412.7L640.6 412.5L641.4 412.2L642.3 411.9L643.1 411.5L644.0 411.0L644.8 410.4L645.6 409.8L646.5 409.1L647.3 408.2L648.1 407.3L649.0 406.2L649.8 405.1L650.7 403.9L651.5 402.5L652.3 401.1L653.2 399.6L654.0 398.0L654.9 396.3L655.7 394.6L656.5 392.7L657.4 390.8L658.2 388.9L659.0 387.0L659.9 385.0L660.7 383.1L661.6 381.1L662.4 379.2L663.2 377.4L664.1 375.6L664.9 373.9L665.8 372.3L666.6 370.8L667.4 369.5L668.3 368.3L669.1 367.3L669.9 366.5L670.8 365.8L671.6 365.4L672.5 365.2L673.3 365.1L674.1 365.3L675.0 365.7L675.8 366.2L676.6 367.0L677.5 368.0L678.3 369.1L679.2 370.4L680.0 371.8L680.8 373.3L681.7 375.0L682.5 376.7L683.4 378.5L684.2 380.4L685.0 382.2L685.9 384.1L686.7 385.9L687.5 387.6L688.4 389.3L689.2 390.9L690.1 392.3L690.9 393.6L691.7 394.8L692.6 395.8L693.4 396.6L694.3 397.3L695.1 397.8L695.9 398.0L696.8 398.1L697.6 398.1L698.4 397.9L699.3 397.5L700.1 397.0L701.0 396.3L701.8 395.6L702.6 394.8L703.5 394.0L704.3 393.2L705.1 392.3L706.0 391.5L706.8 390.8L707.7 390.1L708.5 389.6L709.3 389.2L710.2 388.9L711.0 388.8L711.9 388.9L712.7 389.1L713.5 389.6L714.4 390.2L715.2 391.1L716.0 392.1L716.9 393.3L717.7 394.6L718.6 396.1L719.4 397.8L720.2 399.5L721.1 401.4L721.9 403.3L722.8 405.3L723.6 407.2L724.4 409.2L725.3 411.2L726.1 413.2L726.9 415.1L727.8 417.0L728.6 418.8L729.5 420.5L730.3 422.1L731.1 423.7L732.0 425.1L732.8 426.4L733.6 427.7L734.5 428.8L735.3 429.8L736.2 430.8L737.0 431.6L737.8 432.4L738.7 433.1L739.5 433.7L740.4 434.2L741.2 434.7L742.0 435.1L742.9 435.5L743.7 435.8L744.5 436.1L745.4 436.4L746.2 436.6L747.1 436.8L747.9 437.0L748.7 437.1L749.6 437.3L750.4 437.4L751.3 437.5L752.1 437.6L752.9 437.7L753.8 437.8L754.6 437.9L755.4 438.0L756.3 438.1L757.1 438.2L758.0 438.2L758.8 438.3L759.6 438.4L760.5 438.4L761.3 438.5L762.1 438.6L763.0 438.6L763.8 438.7L764.7 438.8L765.5 438.8L766.3 438.9L767.2 438.9L768.0 439.0L768.9 439.0L769.7 439.1L770.5 439.2L771.4 439.2L772.2 439.3L773.0 439.3L773.9 439.4L774.7 439.4L775.6 439.5L776.4 439.5L777.2 439.6L778.1 439.6L778.9 439.7L779.8 439.7L780.6 439.8L781.4 439.8L782.3 439.9L783.1 439.9L783.9 440.0L784.8 440.0L785.6 440.1L786.5 440.1L787.3 440.2L788.1 440.2L789.0 440.3L789.8 440.3L790.6 440.4L791.5 440.4L792.3 440.4L793.2 440.5L794.0 440.5" stroke="#7d8489" stroke-width="1.8" fill="none"/></g><rect x="320.50" y="485.60" width="210.80" height="83.00" fill="none" stroke="#2b2b2b" stroke-width="1.25"/><path d="M320.50 568.60v-6M346.85 568.60v-3.5M373.20 568.60v-6M399.55 568.60v-3.5M425.90 568.60v-6M452.25 568.60v-3.5M478.60 568.60v-6M504.95 568.60v-3.5M531.30 568.60v-6M320.50 568.60h6M320.50 558.23h3.5M320.50 547.85h6M320.50 537.48h3.5M320.50 527.10h6M320.50 516.73h3.5M320.50 506.35h6M320.50 495.98h3.5M320.50 485.60h6" stroke="#2b2b2b" stroke-width="1.1" fill="none"/><g font-size="10.5" fill="#262626"><text x="320.50" y="584.50" text-anchor="middle">1,3</text><text x="373.20" y="584.50" text-anchor="middle">1,4</text><text x="425.90" y="584.50" text-anchor="middle">1,5</text><text x="478.60" y="584.50" text-anchor="middle">1,6</text><text x="531.30" y="584.50" text-anchor="middle">1,7</text><text x="316.50" y="575.40" text-anchor="end">2</text><text x="316.50" y="554.65" text-anchor="end">3</text><text x="316.50" y="533.90" text-anchor="end">4</text><text x="316.50" y="513.15" text-anchor="end">5</text><text x="316.50" y="492.40" text-anchor="end">6</text></g><text x="412.50" y="498.50" text-anchor="middle" font-size="12.2" fill="#1a1a1a">DanWood</text><text x="0" y="0" transform="translate(302.00 527.10) rotate(-90)" text-anchor="middle" font-size="12.5" fill="#262626">y</text><text x="425.90" y="598.6" text-anchor="middle" font-size="12.5" fill="#262626">x</text><clipPath id="cDanWood"><rect x="317.50" y="482.60" width="216.80" height="89.00"/></clipPath><g clip-path="url(#cDanWood)"><g fill="#2d5fa8"><circle cx="325.2" cy="565.7" r="2.6"/><circle cx="410.6" cy="539.1" r="2.6"/><circle cx="420.6" cy="535.5" r="2.6"/><circle cx="460.2" cy="520.0" r="2.6"/><circle cx="484.4" cy="508.8" r="2.6"/><circle cx="520.8" cy="492.7" r="2.6"/></g><path d="M325.2 565.0L328.5 564.2L331.8 563.3L335.0 562.5L338.3 561.6L341.5 560.7L344.8 559.8L348.1 559.0L351.3 558.0L354.6 557.1L357.8 556.2L361.1 555.2L364.3 554.3L367.6 553.3L370.9 552.3L374.1 551.3L377.4 550.3L380.6 549.3L383.9 548.3L387.2 547.2L390.4 546.2L393.7 545.1L396.9 544.0L400.2 542.9L403.4 541.8L406.7 540.7L410.0 539.5L413.2 538.4L416.5 537.2L419.7 536.0L423.0 534.9L426.3 533.6L429.5 532.4L432.8 531.2L436.0 529.9L439.3 528.7L442.6 527.4L445.8 526.1L449.1 524.8L452.3 523.4L455.6 522.1L458.8 520.7L462.1 519.4L465.4 518.0L468.6 516.6L471.9 515.2L475.1 513.7L478.4 512.3L481.7 510.8L484.9 509.3L488.2 507.8L491.4 506.3L494.7 504.8L497.9 503.2L501.2 501.7L504.5 500.1L507.7 498.5L511.0 496.9L514.2 495.2L517.5 493.6L520.8 491.9" stroke="#eb9b5a" stroke-width="1.1" fill="none"/></g><rect x="583.60" y="485.60" width="210.40" height="83.00" fill="none" stroke="#2b2b2b" stroke-width="1.25"/><path d="M583.60 568.60v-6M609.90 568.60v-3.5M636.20 568.60v-6M662.50 568.60v-3.5M688.80 568.60v-6M715.10 568.60v-3.5M741.40 568.60v-6M767.70 568.60v-3.5M794.00 568.60v-6M583.60 568.60h6M583.60 558.23h3.5M583.60 547.85h6M583.60 537.48h3.5M583.60 527.10h6M583.60 516.73h3.5M583.60 506.35h6M583.60 495.98h3.5M583.60 485.60h6" stroke="#2b2b2b" stroke-width="1.1" fill="none"/><g font-size="10.5" fill="#262626"><text x="583.60" y="584.50" text-anchor="middle">0</text><text x="636.20" y="584.50" text-anchor="middle">200</text><text x="688.80" y="584.50" text-anchor="middle">400</text><text x="741.40" y="584.50" text-anchor="middle">600</text><text x="794.00" y="584.50" text-anchor="middle">800</text><text x="579.60" y="575.40" text-anchor="end">10</text><text x="579.60" y="554.65" text-anchor="end">30</text><text x="579.60" y="533.90" text-anchor="end">50</text><text x="579.60" y="513.15" text-anchor="end">70</text><text x="579.60" y="492.40" text-anchor="end">90</text></g><text x="675.70" y="498.50" text-anchor="middle" font-size="12.2" fill="#1a1a1a">Misra1b</text><text x="688.80" y="598.6" text-anchor="middle" font-size="12.5" fill="#262626">x</text><clipPath id="cMisra1b"><rect x="580.60" y="482.60" width="216.40" height="89.00"/></clipPath><g clip-path="url(#cMisra1b)"><g fill="#2d5fa8"><circle cx="604.0" cy="568.5" r="2.6"/><circle cx="613.8" cy="563.7" r="2.6"/><circle cx="620.7" cy="560.4" r="2.6"/><circle cx="633.8" cy="554.1" r="2.6"/><circle cx="646.7" cy="548.3" r="2.6"/><circle cx="659.6" cy="542.5" r="2.6"/><circle cx="671.1" cy="537.5" r="2.6"/><circle cx="683.1" cy="532.5" r="2.6"/><circle cx="698.0" cy="526.3" r="2.6"/><circle cx="709.1" cy="521.9" r="2.6"/><circle cx="724.8" cy="515.7" r="2.6"/><circle cx="739.6" cy="510.1" r="2.6"/><circle cx="764.8" cy="500.7" r="2.6"/><circle cx="783.5" cy="494.1" r="2.6"/></g><path d="M604.0 568.6L607.0 567.1L610.0 565.6L613.0 564.2L616.0 562.7L619.0 561.3L622.0 559.8L624.9 558.4L627.9 557.0L630.9 555.6L633.9 554.2L636.9 552.8L639.9 551.4L642.9 550.0L645.9 548.7L648.9 547.3L651.9 546.0L654.9 544.6L657.9 543.3L660.8 542.0L663.8 540.7L666.8 539.4L669.8 538.1L672.8 536.8L675.8 535.5L678.8 534.2L681.8 533.0L684.8 531.7L687.8 530.5L690.8 529.2L693.7 528.0L696.7 526.8L699.7 525.5L702.7 524.3L705.7 523.1L708.7 521.9L711.7 520.7L714.7 519.5L717.7 518.4L720.7 517.2L723.7 516.0L726.6 514.9L729.6 513.7L732.6 512.6L735.6 511.5L738.6 510.3L741.6 509.2L744.6 508.1L747.6 507.0L750.6 505.9L753.6 504.8L756.6 503.7L759.6 502.6L762.5 501.6L765.5 500.5L768.5 499.4L771.5 498.4L774.5 497.3L777.5 496.3L780.5 495.3L783.5 494.2" stroke="#eb9b5a" stroke-width="1.1" fill="none"/></g>
</svg>
<div class="a" style="left:853px;top:60px;width:347px;height:16px;background:#1f2124;"></div>
<div class="a" style="left:854px;top:62px;width:86px;height:14px;background:#2e3135;"></div>
<div class="t" style="left:860.5px;top:63.62px;font-size:9.9px;line-height:1;color:#f0f0f0;">Properties: Fit</div>
<div class="a" style="left:853px;top:76px;width:347px;height:530px;background:#36393d;"></div>
<svg class="a" style="left:927.35px;top:65.55px;overflow:visible;" width="6.5" height="6.5" viewBox="0 0 6.5 6.5"><path d="M0 0L6.5 6.5M6.5 0L0 6.5" stroke="#d8dadc" stroke-width="1.0"/></svg><svg class="a" style="left:1145px;top:66px;overflow:visible;" width="6" height="4" viewBox="0 0 6 4"><path d="M0 0h6l-3 4z" fill="#101113"/></svg><svg class="a" style="left:1159.5px;top:64px;overflow:visible;" width="7" height="8" viewBox="0 0 7 8"><path d="M2 0.5h4.5v4.5 M0.5 2.5h4.5v5h-4.5z" fill="none" stroke="#101113" stroke-width="1.2"/></svg><svg class="a" style="left:1176px;top:63.5px;overflow:visible;" width="5" height="10" viewBox="0 0 5 10"><path d="M1 0.5h3v5h-3z M0 5.5h5 M2.5 5.5v4" fill="none" stroke="#101113" stroke-width="1.2"/></svg><svg class="a" style="left:1190.0px;top:65.5px;overflow:visible;" width="6" height="6" viewBox="0 0 6 6"><path d="M0 0L6 6M6 0L0 6" stroke="#101113" stroke-width="1.2"/></svg><svg class="a" style="left:181px;top:66px;overflow:visible;" width="6" height="4" viewBox="0 0 6 4"><path d="M0 0h6l-3 4z" fill="#101113"/></svg><svg class="a" style="left:195px;top:64px;overflow:visible;" width="7" height="8" viewBox="0 0 7 8"><path d="M2 0.5h4.5v4.5 M0.5 2.5h4.5v5h-4.5z" fill="none" stroke="#101113" stroke-width="1.2"/></svg><svg class="a" style="left:211.5px;top:63.5px;overflow:visible;" width="5" height="10" viewBox="0 0 5 10"><path d="M1 0.5h3v5h-3z M0 5.5h5 M2.5 5.5v4" fill="none" stroke="#101113" stroke-width="1.2"/></svg><svg class="a" style="left:225.0px;top:65.5px;overflow:visible;" width="6" height="6" viewBox="0 0 6 6"><path d="M0 0L6 6M6 0L0 6" stroke="#101113" stroke-width="1.2"/></svg><svg class="a" style="left:117.95px;top:65.55px;overflow:visible;" width="6.5" height="6.5" viewBox="0 0 6.5 6.5"><path d="M0 0L6.5 6.5M6.5 0L0 6.5" stroke="#d8dadc" stroke-width="1.0"/></svg><svg class="a" style="left:798px;top:66px;overflow:visible;" width="6" height="4" viewBox="0 0 6 4"><path d="M0 0h6l-3 4z" fill="#101113"/></svg><svg class="a" style="left:812px;top:64px;overflow:visible;" width="7" height="8" viewBox="0 0 7 8"><path d="M2 0.5h4.5v4.5 M0.5 2.5h4.5v5h-4.5z" fill="none" stroke="#101113" stroke-width="1.2"/></svg><svg class="a" style="left:828px;top:63.5px;overflow:visible;" width="5" height="10" viewBox="0 0 5 10"><path d="M1 0.5h3v5h-3z M0 5.5h5 M2.5 5.5v4" fill="none" stroke="#101113" stroke-width="1.2"/></svg><svg class="a" style="left:842.0px;top:65.5px;overflow:visible;" width="6" height="6" viewBox="0 0 6 6"><path d="M0 0L6 6M6 0L0 6" stroke="#101113" stroke-width="1.2"/></svg><svg class="a" style="left:219px;top:86px;overflow:visible;" width="10" height="10" viewBox="0 0 10 10"><path d="M0 2.5h10M0 7.5h10" stroke="#eceff1" stroke-width="1.1"/><circle cx="7" cy="2.5" r="1.6" fill="#eceff1"/><circle cx="3" cy="7.5" r="1.6" fill="#2a2d31" stroke="#eceff1" stroke-width="1"/></svg><div class="a" style="left:1177px;top:76px;width:7px;height:530px;background:#3a3d41;"></div><div class="a" style="left:1184px;top:76px;width:16px;height:530px;background:#1c1e21;"></div><div class="a" style="left:1189.5px;top:81px;width:6px;height:363.5px;background:#4d5155;border-radius:3px;"></div><div class="a" style="left:860px;top:83.5px;width:294px;height:22px;background:#1d1f22;"></div><div class="a" style="left:860px;top:83.5px;width:61.5px;height:24px;background:#202326;border-radius:3px 3px 0 0;"></div><div class="a" style="left:860px;top:83.5px;width:61.5px;height:2.3px;background:#3daee9;border-radius:3px 3px 0 0;"></div><div class="a" style="left:921.5px;top:84px;width:1px;height:22px;background:#3a3d41;"></div><div class="t" style="left:830.7px;top:90.73px;width:120px;text-align:center;font-size:10px;color:#eceff1;line-height:1;">General</div><div class="t" style="left:893.0px;top:90.73px;width:120px;text-align:center;font-size:10px;color:#eceff1;line-height:1;">Line</div><div class="t" style="left:955.3px;top:90.73px;width:120px;text-align:center;font-size:10px;color:#eceff1;line-height:1;">Symbol</div><div class="t" style="left:1017.7px;top:90.73px;width:120px;text-align:center;font-size:10px;color:#eceff1;line-height:1;">Values</div><div class="t" style="left:1079.3px;top:90.73px;width:120px;text-align:center;font-size:10px;color:#eceff1;line-height:1;">Filling</div><div class="a" style="left:1154px;top:83.5px;width:23px;height:22.5px;background:#2a2d31;"></div><div class="a" style="left:1156px;top:84.5px;width:10px;height:21px;background:#34373b;border-radius:3px;"></div><div class="a" style="left:1168px;top:84.5px;width:9px;height:21px;background:#34373b;border-radius:3px;"></div><svg class="a" style="left:1159px;top:90.5px;overflow:visible;" width="4" height="8" viewBox="0 0 4 8"><path d="M4 0L0 4L4 8" fill="none" stroke="#6a6e72" stroke-width="1"/></svg><svg class="a" style="left:1171px;top:90.5px;overflow:visible;" width="4" height="8" viewBox="0 0 4 8"><path d="M0 0L4 4L0 8" fill="none" stroke="#eceff1" stroke-width="1.1"/></svg><div class="a" style="left:860px;top:106px;width:317px;height:500px;background:#202326;"></div><div class="a" style="left:860px;top:106px;width:317px;height:1px;background:#2e3135;"></div><div class="t" style="left:863px;top:117.73px;font-size:10px;color:#eceff1;line-height:1;">Name:</div><div class="a" style="left:961.5px;top:110px;width:213.5px;height:23px;background:#151618;box-sizing:border-box;border:1px solid #44474b;border-radius:3px;"></div><div class="t" style="left:967px;top:117.23px;font-size:10px;color:#eceff1;line-height:1;">Fit to 'Plot'</div><div class="t" style="left:863px;top:145.23px;font-size:10px;color:#eceff1;line-height:1;">Comment:</div><div class="a" style="left:961.5px;top:136px;width:213.5px;height:27.5px;background:#151618;box-sizing:border-box;border:1px solid #44474b;border-radius:3px;"></div><div class="a" style="left:1060px;top:155.5px;width:16px;height:7.5px;background:#55585c;"></div><div class="a" style="left:863px;top:176px;width:86px;height:20.5px;background:#3a3d41;box-sizing:border-box;border:1px solid #44474b;border-radius:3px;"></div><svg class="a" style="left:887.0px;top:184.0px;overflow:visible;" width="8.5" height="4.6" viewBox="0 0 8.5 4.6"><path d="M0 0L4.25 4.6L8.5 0" stroke="#eceff1" stroke-width="1.1" fill="none" stroke-linejoin="round" stroke-linecap="round"/></svg><div class="t" style="left:900.75px;top:181.93px;font-size:10px;color:#f4f5f6;line-height:1;font-weight:bold;">Data:</div><div class="t" style="left:863px;top:207.93px;font-size:10px;color:#eceff1;line-height:1;">Source:</div><div class="a" style="left:961.5px;top:200.5px;width:213.5px;height:23px;background:#2c2f33;box-sizing:border-box;border:1px solid #4a4d51;border-radius:3px;"></div><svg class="a" style="left:1160.75px;top:210.3px;overflow:visible;" width="7.5" height="4" viewBox="0 0 7.5 4"><path d="M0 0L3.75 4L7.5 0" stroke="#eceff1" stroke-width="1.05" fill="none" stroke-linejoin="round" stroke-linecap="round"/></svg><div class="t" style="left:966.0px;top:207.53px;font-size:10px;color:#eceff1;line-height:1;">XY-Curve</div><div class="t" style="left:863px;top:234.73px;font-size:10px;color:#eceff1;line-height:1;">Curve:</div><div class="a" style="left:961.5px;top:227.5px;width:213.5px;height:22.5px;background:#2c2f33;box-sizing:border-box;border:1px solid #4a4d51;border-radius:3px;"></div><svg class="a" style="left:1160.75px;top:237.05px;overflow:visible;" width="7.5" height="4" viewBox="0 0 7.5 4"><path d="M0 0L3.75 4L7.5 0" stroke="#eceff1" stroke-width="1.05" fill="none" stroke-linejoin="round" stroke-linecap="round"/></svg><div class="a" style="left:863px;top:263.8px;width:86px;height:20.5px;background:#3a3d41;box-sizing:border-box;border:1px solid #44474b;border-radius:3px;"></div><svg class="a" style="left:878.75px;top:271.8px;overflow:visible;" width="8.5" height="4.6" viewBox="0 0 8.5 4.6"><path d="M0 0L4.25 4.6L8.5 0" stroke="#eceff1" stroke-width="1.1" fill="none" stroke-linejoin="round" stroke-linecap="round"/></svg><div class="t" style="left:892.5px;top:269.74px;font-size:10px;color:#f4f5f6;line-height:1;font-weight:bold;">Weights:</div><div class="t" style="left:863px;top:295.74px;font-size:10px;color:#eceff1;line-height:1;">X-Weight:</div><div class="a" style="left:961.5px;top:288px;width:126.5px;height:23px;background:#2c2f33;box-sizing:border-box;border:1px solid #4a4d51;border-radius:3px;"></div><svg class="a" style="left:1073.75px;top:297.8px;overflow:visible;" width="7.5" height="4" viewBox="0 0 7.5 4"><path d="M0 0L3.75 4L7.5 0" stroke="#eceff1" stroke-width="1.05" fill="none" stroke-linejoin="round" stroke-linecap="round"/></svg><div class="t" style="left:966.0px;top:295.04px;font-size:10px;color:#eceff1;line-height:1;">No</div><div class="t" style="left:1091.5px;top:295.74px;font-size:10px;color:#6c7074;line-height:1;">col =</div><div class="a" style="left:1114.5px;top:288px;width:59.5px;height:23px;background:#282a2e;box-sizing:border-box;border:1px solid #33363a;border-radius:3px;"></div><svg class="a" style="left:1159.75px;top:297.8px;overflow:visible;" width="7.5" height="4" viewBox="0 0 7.5 4"><path d="M0 0L3.75 4L7.5 0" stroke="#55595d" stroke-width="1.0" fill="none" stroke-linejoin="round" stroke-linecap="round"/></svg><div class="t" style="left:863px;top:322.44px;font-size:10px;color:#eceff1;line-height:1;">Y-Weight:</div><div class="a" style="left:961.5px;top:315px;width:126.5px;height:23px;background:#2c2f33;box-sizing:border-box;border:1px solid #4a4d51;border-radius:3px;"></div><svg class="a" style="left:1073.75px;top:324.8px;overflow:visible;" width="7.5" height="4" viewBox="0 0 7.5 4"><path d="M0 0L3.75 4L7.5 0" stroke="#eceff1" stroke-width="1.05" fill="none" stroke-linejoin="round" stroke-linecap="round"/></svg><div class="t" style="left:966.0px;top:322.04px;font-size:10px;color:#eceff1;line-height:1;">No</div><div class="t" style="left:1091.5px;top:322.44px;font-size:10px;color:#6c7074;line-height:1;">col =</div><div class="a" style="left:1114.5px;top:315px;width:59.5px;height:23px;background:#282a2e;box-sizing:border-box;border:1px solid #33363a;border-radius:3px;"></div><svg class="a" style="left:1159.75px;top:324.8px;overflow:visible;" width="7.5" height="4" viewBox="0 0 7.5 4"><path d="M0 0L3.75 4L7.5 0" stroke="#55595d" stroke-width="1.0" fill="none" stroke-linejoin="round" stroke-linecap="round"/></svg><div class="a" style="left:1105px;top:346px;width:64.5px;height:24.5px;background:#2a2d31;box-sizing:border-box;border:1px solid #46494d;border-radius:3px;"></div><svg class="a" style="left:1113px;top:353px;overflow:visible;" width="10" height="10" viewBox="0 0 10 10"><path d="M0 2.5h10M0 7.5h10" stroke="#eceff1" stroke-width="1.1"/><circle cx="7" cy="2.5" r="1.6" fill="#eceff1"/><circle cx="3" cy="7.5" r="1.6" fill="#2a2d31" stroke="#eceff1" stroke-width="1"/></svg><div class="t" style="left:1128px;top:353.94px;font-size:10px;color:#eceff1;line-height:1;">Options</div><div class="a" style="left:863px;top:354.5px;width:86px;height:20.5px;background:#3a3d41;box-sizing:border-box;border:1px solid #44474b;border-radius:3px;"></div><svg class="a" style="left:891.25px;top:362.5px;overflow:visible;" width="8.5" height="4.6" viewBox="0 0 8.5 4.6"><path d="M0 0L4.25 4.6L8.5 0" stroke="#eceff1" stroke-width="1.1" fill="none" stroke-linejoin="round" stroke-linecap="round"/></svg><div class="t" style="left:905.0px;top:360.44px;font-size:10px;color:#f4f5f6;line-height:1;font-weight:bold;">Fit:</div><div class="t" style="left:863px;top:386.24px;font-size:10px;color:#eceff1;line-height:1;">Category:</div><div class="a" style="left:961.5px;top:378.3px;width:213.5px;height:23.5px;background:#2c2f33;box-sizing:border-box;border:1px solid #4a4d51;border-radius:3px;"></div><svg class="a" style="left:1160.75px;top:388.35px;overflow:visible;" width="7.5" height="4" viewBox="0 0 7.5 4"><path d="M0 0L3.75 4L7.5 0" stroke="#eceff1" stroke-width="1.05" fill="none" stroke-linejoin="round" stroke-linecap="round"/></svg><div class="t" style="left:966.0px;top:385.59px;font-size:10px;color:#eceff1;line-height:1;">Custom</div><div class="t" style="left:863px;top:405.94px;font-size:10px;color:#eceff1;line-height:1;">f(x) =</div><div class="a" style="left:961px;top:405px;width:188.5px;height:48px;background:#151618;"></div><div class="t" style="left:964px;top:410.63px;font-size:10px;color:#eceff1;line-height:1;"><span style="color:#e8707a;font-weight:bold">exp</span><span style="color:#c7cbc4">(-</span><span style="color:#6dbb6e">b1</span><span style="color:#d99aa0">*</span><span style="color:#9fcf9a">x</span><span style="color:#c7cbc4">)/(</span><span style="color:#6dbb6e">b2</span><span style="color:#c7cbc4">+</span><span style="color:#6dbb6e">b3</span><span style="color:#d99aa0">*</span><span style="color:#9fcf9a">x</span><span style="color:#c7cbc4">)</span></div><div class="a" style="left:1151px;top:405.5px;width:23px;height:22px;background:#2d3034;box-sizing:border-box;border:1px solid #46494d;border-radius:3px;"></div><div class="t" style="left:1152.5px;top:414.40px;width:20px;text-align:center;font-size:6.5px;color:#dfe1e3;line-height:1;font-weight:bold;">Aa</div><div class="a" style="left:1151px;top:430.5px;width:23px;height:22.5px;background:#2d3034;box-sizing:border-box;border:1px solid #46494d;border-radius:3px;"></div><div class="t" style="left:1152.5px;top:431.66px;width:20px;text-align:center;font-size:18px;color:#eceff1;line-height:1;font-family:Liberation Serif,serif;font-weight:bold;">&#960;</div><div class="a" style="left:863px;top:467px;width:86px;height:20.5px;background:#3a3d41;box-sizing:border-box;border:1px solid #44474b;border-radius:3px;"></div><svg class="a" style="left:870.25px;top:475.0px;overflow:visible;" width="8.5" height="4.6" viewBox="0 0 8.5 4.6"><path d="M0 0L4.25 4.6L8.5 0" stroke="#eceff1" stroke-width="1.1" fill="none" stroke-linejoin="round" stroke-linecap="round"/></svg><div class="t" style="left:884.0px;top:472.94px;font-size:10px;color:#f4f5f6;line-height:1;font-weight:bold;">Parameters:</div><div class="a" style="left:961px;top:466.5px;width:213px;height:108px;background:#141517;"></div><div class="a" style="left:961px;top:466.5px;width:213px;height:21.5px;background:#2a2d31;"></div><div class="a" style="left:976px;top:466.5px;width:35px;height:21.5px;background:#2b4356;"></div><div class="a" style="left:975.5px;top:466.5px;width:1px;height:21.5px;background:#3c3f43;"></div><div class="a" style="left:1011px;top:466.5px;width:1px;height:21.5px;background:#3c3f43;"></div><div class="a" style="left:1072.5px;top:466.5px;width:1px;height:21.5px;background:#3c3f43;"></div><div class="a" style="left:1108px;top:466.5px;width:1px;height:21.5px;background:#3c3f43;"></div><div class="a" style="left:961px;top:487.5px;width:213px;height:1px;background:#3c3f43;"></div><div class="t" style="left:1018px;top:472.44px;font-size:10px;color:#eceff1;line-height:1;">Start Value</div><div class="t" style="left:1079.5px;top:472.44px;font-size:10px;color:#eceff1;line-height:1;">Fixed</div><div class="t" style="left:1115.5px;top:472.44px;font-size:10px;color:#eceff1;line-height:1;">Lower Limit</div><div class="a" style="left:961px;top:488.5px;width:14.5px;height:23px;background:#2b4356;"></div><div class="a" style="left:961px;top:511.5px;width:14.5px;height:0.5px;background:#3c3f43;"></div><div class="a" style="left:975.5px;top:488.5px;width:1px;height:23.5px;background:#3c3f43;"></div><div class="a" style="left:976.5px;top:488.5px;width:34.5px;height:23px;background:#1f4a66;"></div><div class="t" style="left:961.2px;top:494.74px;width:14px;text-align:center;font-size:10px;color:#eceff1;line-height:1;font-weight:bold;">1</div><div class="t" style="left:979px;top:494.74px;font-size:10px;color:#eceff1;line-height:1;">b1</div><div class="t" style="left:1014px;top:494.74px;font-size:10px;color:#eceff1;line-height:1;">0,1</div><div class="a" style="left:1084px;top:495.0px;width:11.5px;height:11.5px;background:#2d3034;box-sizing:border-box;border:1px solid #4a4d51;border-radius:2.5px;"></div><div class="a" style="left:961px;top:512.0px;width:14.5px;height:23px;background:#2a2d31;"></div><div class="a" style="left:961px;top:535.0px;width:14.5px;height:0.5px;background:#3c3f43;"></div><div class="a" style="left:975.5px;top:512.0px;width:1px;height:23.5px;background:#3c3f43;"></div><div class="a" style="left:976.5px;top:512.0px;width:34.5px;height:23px;background:#1d1f22;"></div><div class="t" style="left:961.2px;top:518.24px;width:14px;text-align:center;font-size:10px;color:#eceff1;line-height:1;">2</div><div class="t" style="left:979px;top:518.24px;font-size:10px;color:#eceff1;line-height:1;">b2</div><div class="t" style="left:1014px;top:518.24px;font-size:10px;color:#eceff1;line-height:1;">0,01</div><div class="a" style="left:1084px;top:518.5px;width:11.5px;height:11.5px;background:#2d3034;box-sizing:border-box;border:1px solid #4a4d51;border-radius:2.5px;"></div><div class="a" style="left:961px;top:535.5px;width:14.5px;height:23px;background:#2a2d31;"></div><div class="a" style="left:961px;top:558.5px;width:14.5px;height:0.5px;background:#3c3f43;"></div><div class="a" style="left:975.5px;top:535.5px;width:1px;height:23.5px;background:#3c3f43;"></div><div class="a" style="left:976.5px;top:535.5px;width:34.5px;height:23px;background:#1d1f22;"></div><div class="t" style="left:961.2px;top:541.74px;width:14px;text-align:center;font-size:10px;color:#eceff1;line-height:1;">3</div><div class="t" style="left:979px;top:541.74px;font-size:10px;color:#eceff1;line-height:1;">b3</div><div class="t" style="left:1014px;top:541.74px;font-size:10px;color:#eceff1;line-height:1;">0,02</div><div class="a" style="left:1084px;top:542.0px;width:11.5px;height:11.5px;background:#2d3034;box-sizing:border-box;border:1px solid #4a4d51;border-radius:2.5px;"></div><div class="a" style="left:961px;top:559px;width:213px;height:1px;background:#2e3135;"></div><div class="a" style="left:963.5px;top:564px;width:124.5px;height:6px;background:#4d5155;border-radius:3px;"></div><div class="a" style="left:1105.5px;top:582.5px;width:64.5px;height:24px;background:#26282c;box-sizing:border-box;border:1px solid #33363a;border-radius:3px;"></div><svg class="a" style="left:1121.5px;top:588.5px;overflow:visible;" width="11" height="11" viewBox="0 0 11 11"><circle cx="5.5" cy="5.5" r="3.6" fill="none" stroke="#6a6e72" stroke-width="1.3"/><circle cx="5.5" cy="5.5" r="4.6" fill="none" stroke="#6a6e72" stroke-width="1.4" stroke-dasharray="1.6 2"/><path d="M4.5 3.8l2.6 1.7l-2.6 1.7z" fill="#6a6e72"/></svg><div class="t" style="left:1135.5px;top:590.44px;font-size:10px;color:#6a6e72;line-height:1;">Run</div>
<div class="a" style="left:0px;top:606px;width:1200px;height:1px;background:#141517;"></div>
<div class="a" style="left:0px;top:607px;width:1200px;height:1px;background:#2a2c30;"></div>
</body></html>
